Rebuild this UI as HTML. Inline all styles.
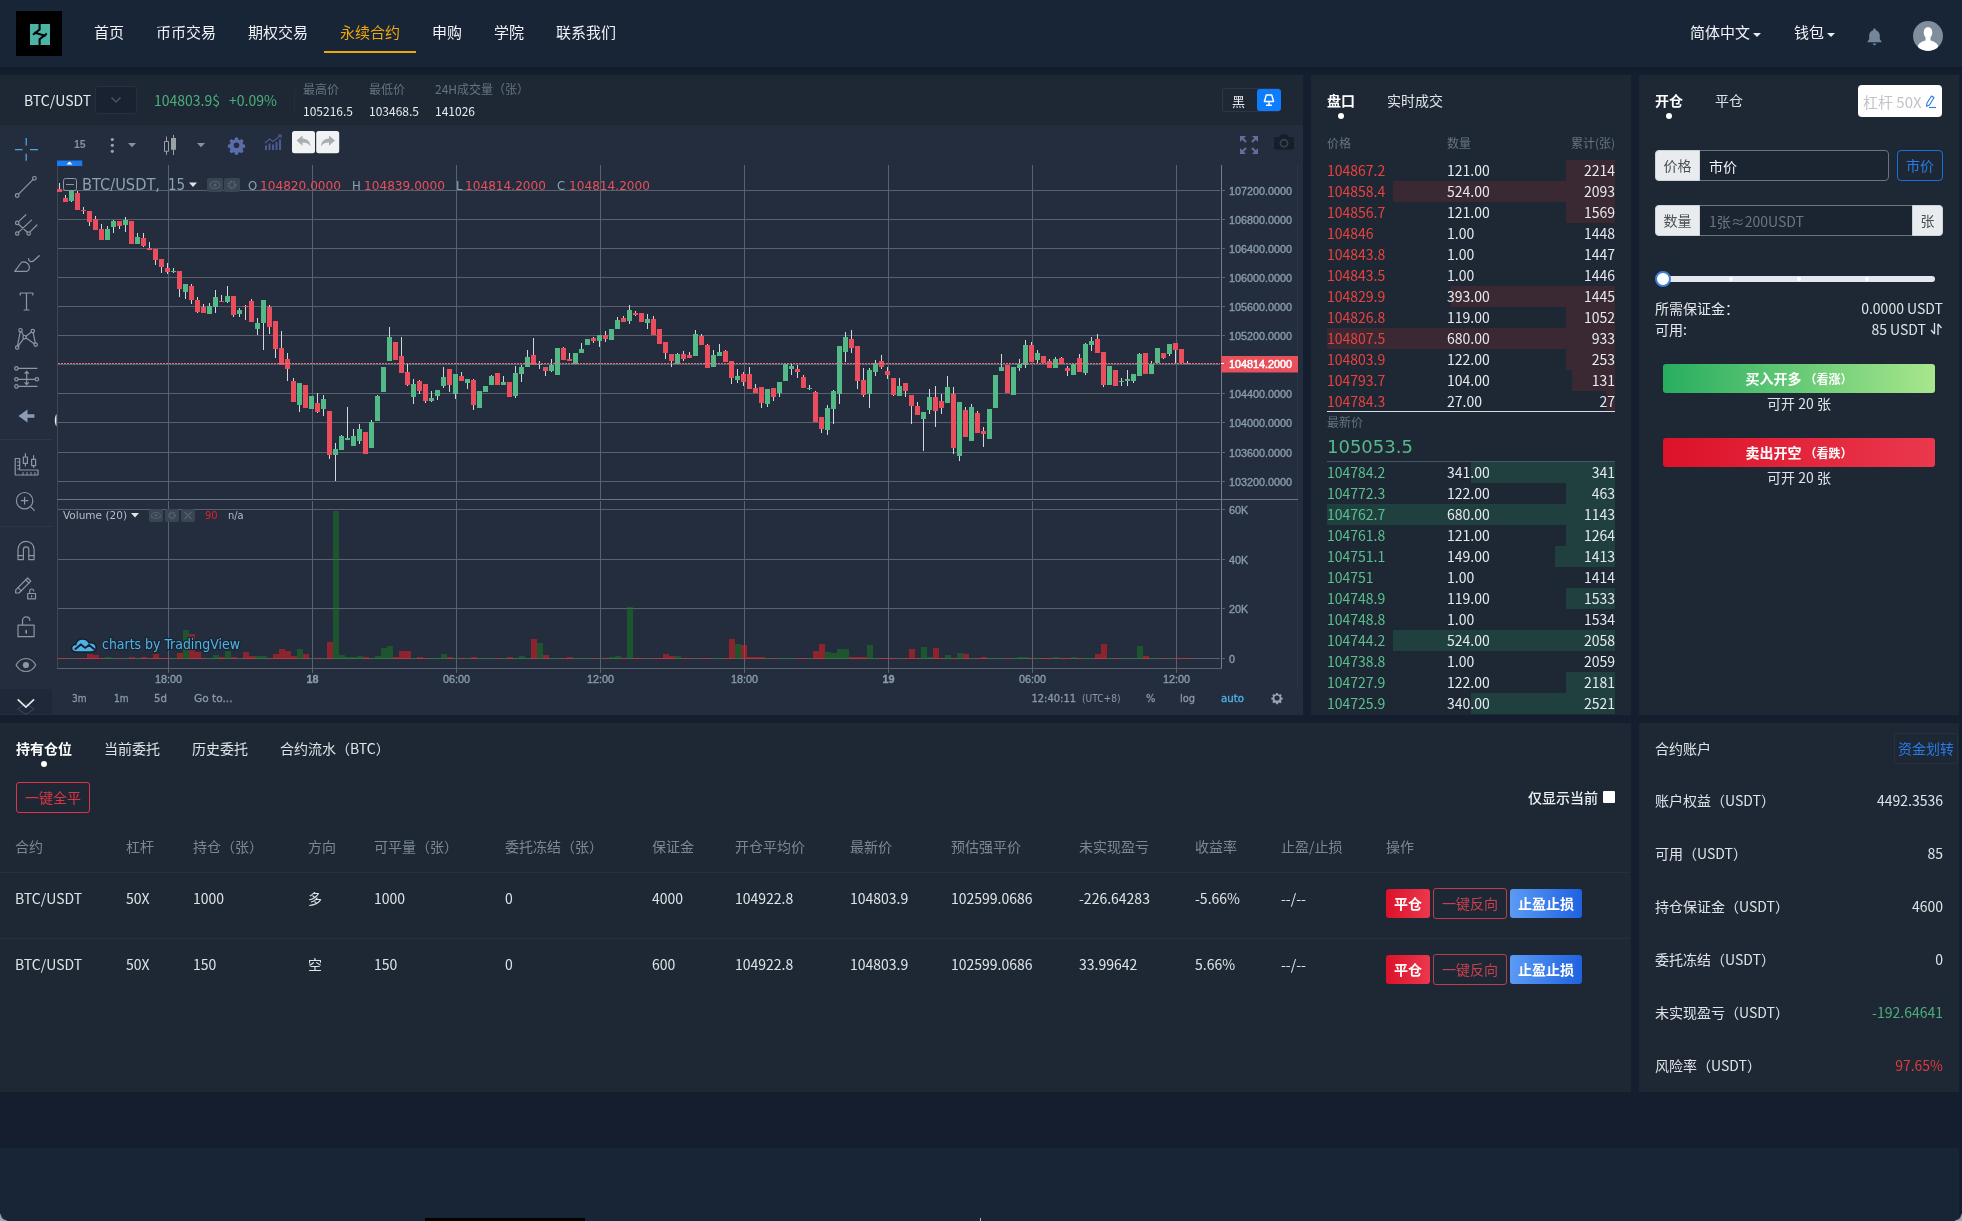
<!DOCTYPE html>
<html lang="zh-CN">
<head>
<meta charset="utf-8">
<title>永续合约 BTC/USDT</title>
<style>
*{box-sizing:border-box;margin:0;padding:0}
html,body{width:1962px;height:1221px;overflow:hidden}
body{background:#151e2e;color:#e1e5ea;font-family:"Noto Sans CJK SC","Liberation Sans",sans-serif;font-size:14px;line-height:20px;position:relative}
.abs{position:absolute}
.panel{position:absolute;background:#1e2835}
/* header */
#hd{left:0;top:0;width:1962px;height:67px;background:#172536;box-shadow:0 1px 4px rgba(10,14,24,.35)}
#logo{left:16px;top:11px;width:46px;height:45px;background:#000}
.nav{position:absolute;top:21px;font-size:15px;line-height:22px;color:#f1f3f6;white-space:nowrap}
.nav.on{color:#f0a70a}
#navline{left:324px;top:51px;width:92px;height:2px;background:#f0a70a}
.caret{display:inline-block;width:0;height:0;border-left:4px solid transparent;border-right:4px solid transparent;border-top:4px solid #e8ebef;vertical-align:middle;margin-left:3px;position:relative;top:1px}
/* symbol bar */
#sym{left:0;top:75px;width:1303px;height:50px;background:#1e2835}
.t{position:absolute;white-space:nowrap}
.g{color:#4caf7a}
.r{color:#e8423f}
.mut{color:#677380}
/* order book */
#ob{left:1311px;top:75px;width:320px;height:640px}
.obrow{position:absolute;left:16px;width:288px;height:21px;font-size:14px;line-height:21px}
.obrow span{position:absolute;top:0;white-space:nowrap}
.obrow .p{left:0}
.obrow .q{left:120px;color:#e6e9ed}
.obrow .c{right:0;color:#e6e9ed}
.obrow i{position:absolute;right:0;top:0;height:21px}
.ask i{background:#3a2833}
.bid i{background:#20403f}
.ask .p{color:#e8423f}
.bid .p{color:#5bbf8c}
/* trade */
#tr{left:1639px;top:75px;width:320px;height:640px}
/* bottom */
#pos{left:0;top:723px;width:1631px;height:369px}
#acc{left:1639px;top:723px;width:320px;height:369px}
#ft{left:0;top:1148px;width:1959px;height:73px;background:#172536}
.th{position:absolute;top:837px;font-size:14px;color:#7d8794;white-space:nowrap}
.td{position:absolute;font-size:14px;color:#dfe3e8;white-space:nowrap}
.btn{position:absolute;height:29px;line-height:29px;border-radius:3px;font-size:14px;text-align:center;white-space:nowrap}
/* chart */
#chart{left:0;top:125px;width:1303px;height:590px;background:#232d3d;overflow:hidden}
</style>
</head>
<body>
<div id="wrap" style="position:absolute;left:0;top:0;width:1962px;height:1221px;will-change:transform;overflow:hidden">
<div id="hd" class="abs">
  <div id="logo" class="abs">
    <svg width="46" height="45" viewBox="0 0 46 45"><rect x="14" y="13" width="20" height="21" fill="#4bb4a5"/><path d="M23.600 13V18.500L17 23.800M18.300 21.600L29.700 24.900M30.800 22.600L23.600 28.200V34" fill="none" stroke="#020406" stroke-width="2.100"/></svg>
  </div>
  <span class="nav" style="left:94px">首页</span>
  <span class="nav" style="left:156px">币币交易</span>
  <span class="nav" style="left:248px">期权交易</span>
  <span class="nav on" style="left:340px">永续合约</span>
  <span class="nav" style="left:432px">申购</span>
  <span class="nav" style="left:494px">学院</span>
  <span class="nav" style="left:556px">联系我们</span>
  <div id="navline" class="abs"></div>
  <span class="nav" style="left:1690px">简体中文<i class="caret"></i></span>
  <span class="nav" style="left:1794px">钱包<i class="caret"></i></span>
  <svg class="abs" style="left:1866px;top:27px" width="17" height="20" viewBox="0 0 17 20"><path d="M8.500 1.500c.8 0 1.300.5 1.300 1.200v.5c2.500.6 4 2.700 4 5.300v3.800l1.700 2.200v.8H1.500v-.8l1.700-2.200V8.500c0-2.600 1.500-4.700 4-5.300v-.5c0-.7.500-1.200 1.300-1.200z" fill="#74879a"/><path d="M6.800 16.500h3.400c0 1-.8 1.700-1.700 1.700s-1.700-.7-1.700-1.700z" fill="#74879a"/></svg>
  <svg class="abs" style="left:1913px;top:21px" width="30" height="30" viewBox="0 0 30 30"><clipPath id="avc"><circle cx="15" cy="15" r="15"/></clipPath><circle cx="15" cy="15" r="15" fill="#7f8d9c"/><g clip-path="url(#avc)" fill="#fff"><ellipse cx="15" cy="11.500" rx="4.300" ry="5.500"/><path d="M12.500 15h5v4.500c3.500 1 6.500 2.500 7.500 5v6h-20v-6c1-2.500 4-4 7.500-5z"/></g></svg>
</div>
<div id="sym" class="abs">
  <span class="t" style="left:24px;top:14px;font-size:14px;line-height:22px;color:#e6e9ed">BTC/USDT</span>
  <div class="abs" style="left:95px;top:11px;width:42px;height:28px;background:#192231;border:1px solid #263040;border-radius:3px"></div>
  <svg class="abs" style="left:110px;top:21px" width="12" height="8" viewBox="0 0 12 8"><path d="M1.500 1.500L6 6l4.500-4.500" fill="none" stroke="#4f5b6b" stroke-width="1.200"/></svg>
  <span class="t g" style="left:154px;top:14px;font-size:14px;line-height:22px">104803.9$</span>
  <span class="t g" style="left:229px;top:14px;font-size:14px;line-height:22px">+0.09%</span>
  <div class="abs" style="left:294px;top:14px;width:1px;height:26px;background:#232d3b"></div>
  <span class="t mut" style="left:303px;top:5px;font-size:12px;line-height:18px">最高价</span>
  <span class="t" style="left:303px;top:27px;font-size:12px;line-height:18px;color:#e6e9ed">105216.5</span>
  <span class="t mut" style="left:369px;top:5px;font-size:12px;line-height:18px">最低价</span>
  <span class="t" style="left:369px;top:27px;font-size:12px;line-height:18px;color:#e6e9ed">103468.5</span>
  <span class="t mut" style="left:435px;top:5px;font-size:12px;line-height:18px">24H成交量（张）</span>
  <span class="t" style="left:435px;top:27px;font-size:12px;line-height:18px;color:#e6e9ed">141026</span>
  <div class="abs" style="left:1222px;top:13px;width:59px;height:24px;border:1px solid #2b3544;border-radius:3px"></div>
  <span class="t" style="left:1232px;top:16px;font-size:13px;line-height:20px;color:#e6e8ec">黑</span>
  <div class="abs" style="left:1257px;top:14px;width:24px;height:22px;background:#0d7dff;border-radius:3px"></div>
  <svg class="abs" style="left:1262px;top:17px" width="14" height="16" viewBox="0 0 14 16"><path d="M4.300 3h5.400l1.900 6.500H2.400z" fill="none" stroke="#fff" stroke-width="1.400" stroke-linejoin="round"/><path d="M7 9.500v3.500M4 13.300h6" stroke="#fff" stroke-width="1.400"/></svg>
</div>
<div id="chart" class="abs">
<svg width="1303" height="590" viewBox="0 125 1303 590" style="position:absolute;left:0;top:0;font-family:'Liberation Sans',sans-serif">
<rect x="168" y="165" width="1" height="335" fill="#58616d"/>
<rect x="168" y="501" width="1" height="168" fill="#58616d"/>
<rect x="312" y="165" width="1" height="335" fill="#58616d"/>
<rect x="312" y="501" width="1" height="168" fill="#58616d"/>
<rect x="456" y="165" width="1" height="335" fill="#58616d"/>
<rect x="456" y="501" width="1" height="168" fill="#58616d"/>
<rect x="600" y="165" width="1" height="335" fill="#58616d"/>
<rect x="600" y="501" width="1" height="168" fill="#58616d"/>
<rect x="744" y="165" width="1" height="335" fill="#58616d"/>
<rect x="744" y="501" width="1" height="168" fill="#58616d"/>
<rect x="888" y="165" width="1" height="335" fill="#58616d"/>
<rect x="888" y="501" width="1" height="168" fill="#58616d"/>
<rect x="1032" y="165" width="1" height="335" fill="#58616d"/>
<rect x="1032" y="501" width="1" height="168" fill="#58616d"/>
<rect x="1176" y="165" width="1" height="335" fill="#58616d"/>
<rect x="1176" y="501" width="1" height="168" fill="#58616d"/>
<rect x="57" y="190" width="1163" height="1" fill="#58616d"/><rect x="1222" y="190" width="3" height="1" fill="#58616d"/>
<text x="1229" y="195" font-size="10.800" fill="#8a9cab" stroke="#8a9cab" stroke-width=".350">107200.0000</text>
<rect x="57" y="219" width="1163" height="1" fill="#58616d"/><rect x="1222" y="219" width="3" height="1" fill="#58616d"/>
<text x="1229" y="224" font-size="10.800" fill="#8a9cab" stroke="#8a9cab" stroke-width=".350">106800.0000</text>
<rect x="57" y="248" width="1163" height="1" fill="#58616d"/><rect x="1222" y="248" width="3" height="1" fill="#58616d"/>
<text x="1229" y="253" font-size="10.800" fill="#8a9cab" stroke="#8a9cab" stroke-width=".350">106400.0000</text>
<rect x="57" y="277" width="1163" height="1" fill="#58616d"/><rect x="1222" y="277" width="3" height="1" fill="#58616d"/>
<text x="1229" y="282" font-size="10.800" fill="#8a9cab" stroke="#8a9cab" stroke-width=".350">106000.0000</text>
<rect x="57" y="306" width="1163" height="1" fill="#58616d"/><rect x="1222" y="306" width="3" height="1" fill="#58616d"/>
<text x="1229" y="311" font-size="10.800" fill="#8a9cab" stroke="#8a9cab" stroke-width=".350">105600.0000</text>
<rect x="57" y="335" width="1163" height="1" fill="#58616d"/><rect x="1222" y="335" width="3" height="1" fill="#58616d"/>
<text x="1229" y="340" font-size="10.800" fill="#8a9cab" stroke="#8a9cab" stroke-width=".350">105200.0000</text>
<rect x="57" y="364" width="1163" height="1" fill="#58616d"/><rect x="1222" y="364" width="3" height="1" fill="#58616d"/>
<rect x="57" y="393" width="1163" height="1" fill="#58616d"/><rect x="1222" y="393" width="3" height="1" fill="#58616d"/>
<text x="1229" y="398" font-size="10.800" fill="#8a9cab" stroke="#8a9cab" stroke-width=".350">104400.0000</text>
<rect x="57" y="422" width="1163" height="1" fill="#58616d"/><rect x="1222" y="422" width="3" height="1" fill="#58616d"/>
<text x="1229" y="427" font-size="10.800" fill="#8a9cab" stroke="#8a9cab" stroke-width=".350">104000.0000</text>
<rect x="57" y="452" width="1163" height="1" fill="#58616d"/><rect x="1222" y="452" width="3" height="1" fill="#58616d"/>
<text x="1229" y="457" font-size="10.800" fill="#8a9cab" stroke="#8a9cab" stroke-width=".350">103600.0000</text>
<rect x="57" y="481" width="1163" height="1" fill="#58616d"/><rect x="1222" y="481" width="3" height="1" fill="#58616d"/>
<text x="1229" y="486" font-size="10.800" fill="#8a9cab" stroke="#8a9cab" stroke-width=".350">103200.0000</text>
<rect x="57" y="509" width="1163" height="1" fill="#58616d"/><rect x="1222" y="509" width="3" height="1" fill="#58616d"/>
<text x="1229" y="514" font-size="10.800" fill="#8a9cab" stroke="#8a9cab" stroke-width=".350">60K</text>
<rect x="57" y="559" width="1163" height="1" fill="#58616d"/><rect x="1222" y="559" width="3" height="1" fill="#58616d"/>
<text x="1229" y="564" font-size="10.800" fill="#8a9cab" stroke="#8a9cab" stroke-width=".350">40K</text>
<rect x="57" y="608" width="1163" height="1" fill="#58616d"/><rect x="1222" y="608" width="3" height="1" fill="#58616d"/>
<text x="1229" y="613" font-size="10.800" fill="#8a9cab" stroke="#8a9cab" stroke-width=".350">20K</text>
<rect x="57" y="658" width="1163" height="1" fill="#58616d"/><rect x="1222" y="658" width="3" height="1" fill="#58616d"/>
<text x="1229" y="663" font-size="10.800" fill="#8a9cab" stroke="#8a9cab" stroke-width=".350">0</text>
<rect x="57" y="165" width="1" height="504" fill="#3d4756"/>
<rect x="1221" y="165" width="1" height="504" fill="#727b87"/>
<rect x="1297" y="165" width="1" height="524" fill="#2a3545"/>
<rect x="57" y="499" width="1241" height="1" fill="#69727e"/>
<rect x="57" y="668" width="1165" height="1" fill="#58616d"/>
<rect x="57" y="658" width="6" height="1" fill="#f5191d" fill-opacity=".5"/>
<rect x="63" y="658" width="6" height="1" fill="#f5191d" fill-opacity=".5"/>
<rect x="69" y="658" width="6" height="1" fill="#177d20" fill-opacity=".5"/>
<rect x="75" y="658" width="6" height="1" fill="#f5191d" fill-opacity=".5"/>
<rect x="81" y="658" width="6" height="1" fill="#f5191d" fill-opacity=".5"/>
<rect x="87" y="654" width="6" height="5" fill="#f5191d" fill-opacity=".5"/>
<rect x="93" y="655" width="6" height="4" fill="#f5191d" fill-opacity=".5"/>
<rect x="99" y="658" width="6" height="1" fill="#f5191d" fill-opacity=".5"/>
<rect x="105" y="657" width="6" height="2" fill="#177d20" fill-opacity=".5"/>
<rect x="111" y="658" width="6" height="1" fill="#177d20" fill-opacity=".5"/>
<rect x="117" y="658" width="6" height="1" fill="#f5191d" fill-opacity=".5"/>
<rect x="123" y="658" width="6" height="1" fill="#177d20" fill-opacity=".5"/>
<rect x="129" y="657" width="6" height="2" fill="#f5191d" fill-opacity=".5"/>
<rect x="135" y="658" width="6" height="1" fill="#177d20" fill-opacity=".5"/>
<rect x="141" y="657" width="6" height="2" fill="#f5191d" fill-opacity=".5"/>
<rect x="147" y="658" width="6" height="1" fill="#f5191d" fill-opacity=".5"/>
<rect x="153" y="654" width="6" height="5" fill="#f5191d" fill-opacity=".5"/>
<rect x="159" y="658" width="6" height="1" fill="#f5191d" fill-opacity=".5"/>
<rect x="165" y="658" width="6" height="1" fill="#f5191d" fill-opacity=".5"/>
<rect x="171" y="658" width="6" height="1" fill="#177d20" fill-opacity=".5"/>
<rect x="177" y="653" width="6" height="6" fill="#f5191d" fill-opacity=".5"/>
<rect x="183" y="630" width="6" height="29" fill="#177d20" fill-opacity=".5"/>
<rect x="189" y="634" width="6" height="25" fill="#f5191d" fill-opacity=".5"/>
<rect x="195" y="652" width="6" height="7" fill="#f5191d" fill-opacity=".5"/>
<rect x="201" y="658" width="6" height="1" fill="#f5191d" fill-opacity=".5"/>
<rect x="207" y="658" width="6" height="1" fill="#177d20" fill-opacity=".5"/>
<rect x="213" y="655" width="6" height="4" fill="#177d20" fill-opacity=".5"/>
<rect x="219" y="657" width="6" height="2" fill="#f5191d" fill-opacity=".5"/>
<rect x="225" y="651" width="6" height="8" fill="#177d20" fill-opacity=".5"/>
<rect x="231" y="657" width="6" height="2" fill="#f5191d" fill-opacity=".5"/>
<rect x="237" y="658" width="6" height="1" fill="#177d20" fill-opacity=".5"/>
<rect x="243" y="652" width="6" height="7" fill="#f5191d" fill-opacity=".5"/>
<rect x="249" y="656" width="6" height="3" fill="#f5191d" fill-opacity=".5"/>
<rect x="255" y="656" width="6" height="3" fill="#177d20" fill-opacity=".5"/>
<rect x="261" y="656" width="6" height="3" fill="#177d20" fill-opacity=".5"/>
<rect x="267" y="658" width="6" height="1" fill="#f5191d" fill-opacity=".5"/>
<rect x="273" y="654" width="6" height="5" fill="#f5191d" fill-opacity=".5"/>
<rect x="279" y="649" width="6" height="10" fill="#f5191d" fill-opacity=".5"/>
<rect x="285" y="651" width="6" height="8" fill="#f5191d" fill-opacity=".5"/>
<rect x="291" y="656" width="6" height="3" fill="#f5191d" fill-opacity=".5"/>
<rect x="297" y="649" width="6" height="10" fill="#177d20" fill-opacity=".5"/>
<rect x="303" y="654" width="6" height="5" fill="#f5191d" fill-opacity=".5"/>
<rect x="309" y="658" width="6" height="1" fill="#177d20" fill-opacity=".5"/>
<rect x="315" y="658" width="6" height="1" fill="#f5191d" fill-opacity=".5"/>
<rect x="321" y="658" width="6" height="1" fill="#177d20" fill-opacity=".5"/>
<rect x="327" y="642" width="6" height="17" fill="#f5191d" fill-opacity=".5"/>
<rect x="333" y="511" width="6" height="148" fill="#177d20" fill-opacity=".5"/>
<rect x="339" y="655" width="6" height="4" fill="#177d20" fill-opacity=".5"/>
<rect x="345" y="657" width="6" height="2" fill="#177d20" fill-opacity=".5"/>
<rect x="351" y="657" width="6" height="2" fill="#177d20" fill-opacity=".5"/>
<rect x="357" y="656" width="6" height="3" fill="#177d20" fill-opacity=".5"/>
<rect x="363" y="657" width="6" height="2" fill="#f5191d" fill-opacity=".5"/>
<rect x="369" y="658" width="6" height="1" fill="#177d20" fill-opacity=".5"/>
<rect x="375" y="656" width="6" height="3" fill="#177d20" fill-opacity=".5"/>
<rect x="381" y="648" width="6" height="11" fill="#177d20" fill-opacity=".5"/>
<rect x="387" y="646" width="6" height="13" fill="#177d20" fill-opacity=".5"/>
<rect x="393" y="657" width="6" height="2" fill="#f5191d" fill-opacity=".5"/>
<rect x="399" y="651" width="6" height="8" fill="#f5191d" fill-opacity=".5"/>
<rect x="405" y="651" width="6" height="8" fill="#f5191d" fill-opacity=".5"/>
<rect x="411" y="658" width="6" height="1" fill="#177d20" fill-opacity=".5"/>
<rect x="417" y="657" width="6" height="2" fill="#f5191d" fill-opacity=".5"/>
<rect x="423" y="658" width="6" height="1" fill="#f5191d" fill-opacity=".5"/>
<rect x="429" y="658" width="6" height="1" fill="#177d20" fill-opacity=".5"/>
<rect x="435" y="658" width="6" height="1" fill="#177d20" fill-opacity=".5"/>
<rect x="441" y="654" width="6" height="5" fill="#177d20" fill-opacity=".5"/>
<rect x="447" y="657" width="6" height="2" fill="#f5191d" fill-opacity=".5"/>
<rect x="453" y="658" width="6" height="1" fill="#177d20" fill-opacity=".5"/>
<rect x="459" y="658" width="6" height="1" fill="#f5191d" fill-opacity=".5"/>
<rect x="465" y="658" width="6" height="1" fill="#177d20" fill-opacity=".5"/>
<rect x="471" y="657" width="6" height="2" fill="#f5191d" fill-opacity=".5"/>
<rect x="477" y="658" width="6" height="1" fill="#177d20" fill-opacity=".5"/>
<rect x="483" y="658" width="6" height="1" fill="#177d20" fill-opacity=".5"/>
<rect x="489" y="658" width="6" height="1" fill="#177d20" fill-opacity=".5"/>
<rect x="495" y="658" width="6" height="1" fill="#f5191d" fill-opacity=".5"/>
<rect x="501" y="658" width="6" height="1" fill="#177d20" fill-opacity=".5"/>
<rect x="507" y="657" width="6" height="2" fill="#f5191d" fill-opacity=".5"/>
<rect x="513" y="658" width="6" height="1" fill="#177d20" fill-opacity=".5"/>
<rect x="519" y="656" width="6" height="3" fill="#177d20" fill-opacity=".5"/>
<rect x="525" y="658" width="6" height="1" fill="#177d20" fill-opacity=".5"/>
<rect x="531" y="639" width="6" height="20" fill="#f5191d" fill-opacity=".5"/>
<rect x="537" y="643" width="6" height="16" fill="#177d20" fill-opacity=".5"/>
<rect x="543" y="655" width="6" height="4" fill="#f5191d" fill-opacity=".5"/>
<rect x="549" y="658" width="6" height="1" fill="#177d20" fill-opacity=".5"/>
<rect x="555" y="658" width="6" height="1" fill="#177d20" fill-opacity=".5"/>
<rect x="561" y="658" width="6" height="1" fill="#f5191d" fill-opacity=".5"/>
<rect x="567" y="657" width="6" height="2" fill="#f5191d" fill-opacity=".5"/>
<rect x="573" y="658" width="6" height="1" fill="#177d20" fill-opacity=".5"/>
<rect x="579" y="658" width="6" height="1" fill="#177d20" fill-opacity=".5"/>
<rect x="585" y="658" width="6" height="1" fill="#177d20" fill-opacity=".5"/>
<rect x="591" y="658" width="6" height="1" fill="#f5191d" fill-opacity=".5"/>
<rect x="597" y="658" width="6" height="1" fill="#177d20" fill-opacity=".5"/>
<rect x="603" y="658" width="6" height="1" fill="#f5191d" fill-opacity=".5"/>
<rect x="609" y="657" width="6" height="2" fill="#177d20" fill-opacity=".5"/>
<rect x="615" y="656" width="6" height="3" fill="#177d20" fill-opacity=".5"/>
<rect x="621" y="658" width="6" height="1" fill="#f5191d" fill-opacity=".5"/>
<rect x="627" y="607" width="6" height="52" fill="#177d20" fill-opacity=".5"/>
<rect x="633" y="658" width="6" height="1" fill="#f5191d" fill-opacity=".5"/>
<rect x="639" y="658" width="6" height="1" fill="#f5191d" fill-opacity=".5"/>
<rect x="645" y="658" width="6" height="1" fill="#177d20" fill-opacity=".5"/>
<rect x="651" y="658" width="6" height="1" fill="#f5191d" fill-opacity=".5"/>
<rect x="657" y="658" width="6" height="1" fill="#f5191d" fill-opacity=".5"/>
<rect x="663" y="654" width="6" height="5" fill="#f5191d" fill-opacity=".5"/>
<rect x="669" y="656" width="6" height="3" fill="#f5191d" fill-opacity=".5"/>
<rect x="675" y="656" width="6" height="3" fill="#177d20" fill-opacity=".5"/>
<rect x="681" y="658" width="6" height="1" fill="#f5191d" fill-opacity=".5"/>
<rect x="687" y="658" width="6" height="1" fill="#f5191d" fill-opacity=".5"/>
<rect x="693" y="658" width="6" height="1" fill="#177d20" fill-opacity=".5"/>
<rect x="699" y="658" width="6" height="1" fill="#f5191d" fill-opacity=".5"/>
<rect x="705" y="658" width="6" height="1" fill="#f5191d" fill-opacity=".5"/>
<rect x="711" y="658" width="6" height="1" fill="#177d20" fill-opacity=".5"/>
<rect x="717" y="658" width="6" height="1" fill="#177d20" fill-opacity=".5"/>
<rect x="723" y="658" width="6" height="1" fill="#f5191d" fill-opacity=".5"/>
<rect x="729" y="639" width="6" height="20" fill="#f5191d" fill-opacity=".5"/>
<rect x="735" y="644" width="6" height="15" fill="#177d20" fill-opacity=".5"/>
<rect x="741" y="645" width="6" height="14" fill="#f5191d" fill-opacity=".5"/>
<rect x="747" y="657" width="6" height="2" fill="#f5191d" fill-opacity=".5"/>
<rect x="753" y="657" width="6" height="2" fill="#f5191d" fill-opacity=".5"/>
<rect x="759" y="657" width="6" height="2" fill="#f5191d" fill-opacity=".5"/>
<rect x="765" y="658" width="6" height="1" fill="#177d20" fill-opacity=".5"/>
<rect x="771" y="658" width="6" height="1" fill="#f5191d" fill-opacity=".5"/>
<rect x="777" y="658" width="6" height="1" fill="#177d20" fill-opacity=".5"/>
<rect x="783" y="658" width="6" height="1" fill="#177d20" fill-opacity=".5"/>
<rect x="789" y="658" width="6" height="1" fill="#177d20" fill-opacity=".5"/>
<rect x="795" y="658" width="6" height="1" fill="#f5191d" fill-opacity=".5"/>
<rect x="801" y="658" width="6" height="1" fill="#f5191d" fill-opacity=".5"/>
<rect x="807" y="658" width="6" height="1" fill="#177d20" fill-opacity=".5"/>
<rect x="813" y="651" width="6" height="8" fill="#f5191d" fill-opacity=".5"/>
<rect x="819" y="644" width="6" height="15" fill="#f5191d" fill-opacity=".5"/>
<rect x="825" y="652" width="6" height="7" fill="#177d20" fill-opacity=".5"/>
<rect x="831" y="653" width="6" height="6" fill="#177d20" fill-opacity=".5"/>
<rect x="837" y="649" width="6" height="10" fill="#177d20" fill-opacity=".5"/>
<rect x="843" y="649" width="6" height="10" fill="#177d20" fill-opacity=".5"/>
<rect x="849" y="657" width="6" height="2" fill="#f5191d" fill-opacity=".5"/>
<rect x="855" y="657" width="6" height="2" fill="#f5191d" fill-opacity=".5"/>
<rect x="861" y="657" width="6" height="2" fill="#f5191d" fill-opacity=".5"/>
<rect x="867" y="645" width="6" height="14" fill="#177d20" fill-opacity=".5"/>
<rect x="873" y="658" width="6" height="1" fill="#177d20" fill-opacity=".5"/>
<rect x="879" y="658" width="6" height="1" fill="#f5191d" fill-opacity=".5"/>
<rect x="885" y="658" width="6" height="1" fill="#f5191d" fill-opacity=".5"/>
<rect x="891" y="658" width="6" height="1" fill="#f5191d" fill-opacity=".5"/>
<rect x="897" y="658" width="6" height="1" fill="#177d20" fill-opacity=".5"/>
<rect x="903" y="658" width="6" height="1" fill="#f5191d" fill-opacity=".5"/>
<rect x="909" y="649" width="6" height="10" fill="#f5191d" fill-opacity=".5"/>
<rect x="915" y="658" width="6" height="1" fill="#f5191d" fill-opacity=".5"/>
<rect x="921" y="647" width="6" height="12" fill="#177d20" fill-opacity=".5"/>
<rect x="927" y="657" width="6" height="2" fill="#177d20" fill-opacity=".5"/>
<rect x="933" y="648" width="6" height="11" fill="#f5191d" fill-opacity=".5"/>
<rect x="939" y="658" width="6" height="1" fill="#f5191d" fill-opacity=".5"/>
<rect x="945" y="655" width="6" height="4" fill="#177d20" fill-opacity=".5"/>
<rect x="951" y="658" width="6" height="1" fill="#f5191d" fill-opacity=".5"/>
<rect x="957" y="653" width="6" height="6" fill="#177d20" fill-opacity=".5"/>
<rect x="963" y="654" width="6" height="5" fill="#f5191d" fill-opacity=".5"/>
<rect x="969" y="658" width="6" height="1" fill="#177d20" fill-opacity=".5"/>
<rect x="975" y="658" width="6" height="1" fill="#f5191d" fill-opacity=".5"/>
<rect x="981" y="657" width="6" height="2" fill="#f5191d" fill-opacity=".5"/>
<rect x="987" y="658" width="6" height="1" fill="#177d20" fill-opacity=".5"/>
<rect x="993" y="658" width="6" height="1" fill="#177d20" fill-opacity=".5"/>
<rect x="999" y="658" width="6" height="1" fill="#177d20" fill-opacity=".5"/>
<rect x="1005" y="658" width="6" height="1" fill="#f5191d" fill-opacity=".5"/>
<rect x="1011" y="658" width="6" height="1" fill="#177d20" fill-opacity=".5"/>
<rect x="1017" y="657" width="6" height="2" fill="#177d20" fill-opacity=".5"/>
<rect x="1023" y="657" width="6" height="2" fill="#177d20" fill-opacity=".5"/>
<rect x="1029" y="658" width="6" height="1" fill="#f5191d" fill-opacity=".5"/>
<rect x="1035" y="658" width="6" height="1" fill="#177d20" fill-opacity=".5"/>
<rect x="1041" y="658" width="6" height="1" fill="#f5191d" fill-opacity=".5"/>
<rect x="1047" y="658" width="6" height="1" fill="#f5191d" fill-opacity=".5"/>
<rect x="1053" y="657" width="6" height="2" fill="#177d20" fill-opacity=".5"/>
<rect x="1059" y="658" width="6" height="1" fill="#f5191d" fill-opacity=".5"/>
<rect x="1065" y="658" width="6" height="1" fill="#f5191d" fill-opacity=".5"/>
<rect x="1071" y="657" width="6" height="2" fill="#177d20" fill-opacity=".5"/>
<rect x="1077" y="658" width="6" height="1" fill="#f5191d" fill-opacity=".5"/>
<rect x="1083" y="658" width="6" height="1" fill="#177d20" fill-opacity=".5"/>
<rect x="1089" y="658" width="6" height="1" fill="#177d20" fill-opacity=".5"/>
<rect x="1095" y="654" width="6" height="5" fill="#f5191d" fill-opacity=".5"/>
<rect x="1101" y="644" width="6" height="15" fill="#f5191d" fill-opacity=".5"/>
<rect x="1107" y="658" width="6" height="1" fill="#177d20" fill-opacity=".5"/>
<rect x="1113" y="658" width="6" height="1" fill="#f5191d" fill-opacity=".5"/>
<rect x="1119" y="658" width="6" height="1" fill="#177d20" fill-opacity=".5"/>
<rect x="1125" y="658" width="6" height="1" fill="#177d20" fill-opacity=".5"/>
<rect x="1131" y="658" width="6" height="1" fill="#177d20" fill-opacity=".5"/>
<rect x="1137" y="646" width="6" height="13" fill="#177d20" fill-opacity=".5"/>
<rect x="1143" y="656" width="6" height="3" fill="#f5191d" fill-opacity=".5"/>
<rect x="1149" y="658" width="6" height="1" fill="#177d20" fill-opacity=".5"/>
<rect x="1155" y="658" width="6" height="1" fill="#177d20" fill-opacity=".5"/>
<rect x="1161" y="658" width="6" height="1" fill="#f5191d" fill-opacity=".5"/>
<rect x="1167" y="658" width="6" height="1" fill="#177d20" fill-opacity=".5"/>
<rect x="1173" y="658" width="6" height="1" fill="#f5191d" fill-opacity=".5"/>
<rect x="1179" y="658" width="6" height="1" fill="#f5191d" fill-opacity=".5"/>
<rect x="1185" y="658" width="6" height="1" fill="#f5191d" fill-opacity=".5"/>
<rect x="59" y="183" width="1" height="9" fill="#d3d6db"/>
<rect x="57" y="189" width="5" height="3" fill="#eb4d5c"/>
<rect x="65" y="195" width="1" height="7" fill="#d3d6db"/>
<rect x="63" y="198" width="5" height="4" fill="#eb4d5c"/>
<rect x="71" y="191" width="1" height="11" fill="#d3d6db"/>
<rect x="69" y="191" width="5" height="10" fill="#53b987"/>
<rect x="77" y="191" width="1" height="19" fill="#d3d6db"/>
<rect x="75" y="193" width="5" height="17" fill="#eb4d5c"/>
<rect x="83" y="207" width="1" height="7" fill="#d3d6db"/>
<rect x="81" y="210" width="5" height="1" fill="#eb4d5c"/>
<rect x="89" y="211" width="1" height="15" fill="#d3d6db"/>
<rect x="87" y="211" width="5" height="11" fill="#eb4d5c"/>
<rect x="95" y="216" width="1" height="14" fill="#d3d6db"/>
<rect x="93" y="219" width="5" height="11" fill="#eb4d5c"/>
<rect x="101" y="224" width="1" height="16" fill="#d3d6db"/>
<rect x="99" y="229" width="5" height="11" fill="#eb4d5c"/>
<rect x="107" y="226" width="1" height="14" fill="#d3d6db"/>
<rect x="105" y="229" width="5" height="11" fill="#53b987"/>
<rect x="113" y="220" width="1" height="13" fill="#d3d6db"/>
<rect x="111" y="221" width="5" height="6" fill="#53b987"/>
<rect x="119" y="221" width="1" height="8" fill="#d3d6db"/>
<rect x="117" y="221" width="5" height="5" fill="#eb4d5c"/>
<rect x="125" y="217" width="1" height="15" fill="#d3d6db"/>
<rect x="123" y="220" width="5" height="5" fill="#53b987"/>
<rect x="131" y="221" width="1" height="23" fill="#d3d6db"/>
<rect x="129" y="221" width="5" height="23" fill="#eb4d5c"/>
<rect x="137" y="233" width="1" height="11" fill="#d3d6db"/>
<rect x="135" y="237" width="5" height="7" fill="#53b987"/>
<rect x="143" y="233" width="1" height="14" fill="#d3d6db"/>
<rect x="141" y="238" width="5" height="8" fill="#eb4d5c"/>
<rect x="149" y="242" width="1" height="8" fill="#d3d6db"/>
<rect x="147" y="248" width="5" height="2" fill="#eb4d5c"/>
<rect x="155" y="249" width="1" height="16" fill="#d3d6db"/>
<rect x="153" y="249" width="5" height="11" fill="#eb4d5c"/>
<rect x="161" y="259" width="1" height="14" fill="#d3d6db"/>
<rect x="159" y="259" width="5" height="8" fill="#eb4d5c"/>
<rect x="167" y="263" width="1" height="11" fill="#d3d6db"/>
<rect x="165" y="268" width="5" height="4" fill="#eb4d5c"/>
<rect x="173" y="268" width="1" height="5" fill="#d3d6db"/>
<rect x="171" y="271" width="5" height="1" fill="#53b987"/>
<rect x="179" y="271" width="1" height="26" fill="#d3d6db"/>
<rect x="177" y="271" width="5" height="18" fill="#eb4d5c"/>
<rect x="185" y="284" width="1" height="15" fill="#d3d6db"/>
<rect x="183" y="284" width="5" height="8" fill="#53b987"/>
<rect x="191" y="284" width="1" height="20" fill="#d3d6db"/>
<rect x="189" y="286" width="5" height="14" fill="#eb4d5c"/>
<rect x="197" y="297" width="1" height="16" fill="#d3d6db"/>
<rect x="195" y="300" width="5" height="12" fill="#eb4d5c"/>
<rect x="203" y="304" width="1" height="9" fill="#d3d6db"/>
<rect x="201" y="307" width="5" height="6" fill="#eb4d5c"/>
<rect x="209" y="303" width="1" height="11" fill="#d3d6db"/>
<rect x="207" y="306" width="5" height="8" fill="#53b987"/>
<rect x="215" y="290" width="1" height="23" fill="#d3d6db"/>
<rect x="213" y="297" width="5" height="10" fill="#53b987"/>
<rect x="221" y="295" width="1" height="7" fill="#d3d6db"/>
<rect x="219" y="301" width="5" height="1" fill="#eb4d5c"/>
<rect x="227" y="286" width="1" height="17" fill="#d3d6db"/>
<rect x="225" y="296" width="5" height="6" fill="#53b987"/>
<rect x="233" y="296" width="1" height="21" fill="#d3d6db"/>
<rect x="231" y="296" width="5" height="19" fill="#eb4d5c"/>
<rect x="239" y="308" width="1" height="9" fill="#d3d6db"/>
<rect x="237" y="310" width="5" height="4" fill="#53b987"/>
<rect x="245" y="305" width="1" height="15" fill="#d3d6db"/>
<rect x="243" y="306" width="5" height="1" fill="#eb4d5c"/>
<rect x="251" y="299" width="1" height="23" fill="#d3d6db"/>
<rect x="249" y="301" width="5" height="21" fill="#eb4d5c"/>
<rect x="257" y="318" width="1" height="17" fill="#d3d6db"/>
<rect x="255" y="323" width="5" height="6" fill="#53b987"/>
<rect x="263" y="300" width="1" height="50" fill="#d3d6db"/>
<rect x="261" y="300" width="5" height="23" fill="#53b987"/>
<rect x="269" y="305" width="1" height="29" fill="#d3d6db"/>
<rect x="267" y="307" width="5" height="20" fill="#eb4d5c"/>
<rect x="275" y="321" width="1" height="37" fill="#d3d6db"/>
<rect x="273" y="321" width="5" height="28" fill="#eb4d5c"/>
<rect x="281" y="331" width="1" height="34" fill="#d3d6db"/>
<rect x="279" y="348" width="5" height="17" fill="#eb4d5c"/>
<rect x="287" y="353" width="1" height="28" fill="#d3d6db"/>
<rect x="285" y="359" width="5" height="10" fill="#eb4d5c"/>
<rect x="293" y="378" width="1" height="24" fill="#d3d6db"/>
<rect x="291" y="381" width="5" height="21" fill="#eb4d5c"/>
<rect x="299" y="383" width="1" height="29" fill="#d3d6db"/>
<rect x="297" y="383" width="5" height="22" fill="#53b987"/>
<rect x="305" y="385" width="1" height="23" fill="#d3d6db"/>
<rect x="303" y="385" width="5" height="23" fill="#eb4d5c"/>
<rect x="311" y="396" width="1" height="13" fill="#d3d6db"/>
<rect x="309" y="396" width="5" height="13" fill="#53b987"/>
<rect x="317" y="393" width="1" height="20" fill="#d3d6db"/>
<rect x="315" y="403" width="5" height="9" fill="#eb4d5c"/>
<rect x="323" y="395" width="1" height="21" fill="#d3d6db"/>
<rect x="321" y="399" width="5" height="10" fill="#53b987"/>
<rect x="329" y="411" width="1" height="48" fill="#d3d6db"/>
<rect x="327" y="411" width="5" height="44" fill="#eb4d5c"/>
<rect x="335" y="443" width="1" height="38" fill="#d3d6db"/>
<rect x="333" y="449" width="5" height="6" fill="#53b987"/>
<rect x="341" y="435" width="1" height="15" fill="#d3d6db"/>
<rect x="339" y="436" width="5" height="14" fill="#53b987"/>
<rect x="347" y="407" width="1" height="33" fill="#d3d6db"/>
<rect x="345" y="438" width="5" height="2" fill="#53b987"/>
<rect x="353" y="429" width="1" height="17" fill="#d3d6db"/>
<rect x="351" y="436" width="5" height="10" fill="#53b987"/>
<rect x="359" y="424" width="1" height="20" fill="#d3d6db"/>
<rect x="357" y="429" width="5" height="12" fill="#53b987"/>
<rect x="365" y="432" width="1" height="22" fill="#d3d6db"/>
<rect x="363" y="432" width="5" height="22" fill="#eb4d5c"/>
<rect x="371" y="420" width="1" height="28" fill="#d3d6db"/>
<rect x="369" y="422" width="5" height="26" fill="#53b987"/>
<rect x="377" y="395" width="1" height="26" fill="#d3d6db"/>
<rect x="375" y="396" width="5" height="25" fill="#53b987"/>
<rect x="383" y="367" width="1" height="25" fill="#d3d6db"/>
<rect x="381" y="367" width="5" height="25" fill="#53b987"/>
<rect x="389" y="327" width="1" height="34" fill="#d3d6db"/>
<rect x="387" y="337" width="5" height="24" fill="#53b987"/>
<rect x="395" y="342" width="1" height="18" fill="#d3d6db"/>
<rect x="393" y="342" width="5" height="18" fill="#eb4d5c"/>
<rect x="401" y="337" width="1" height="36" fill="#d3d6db"/>
<rect x="399" y="356" width="5" height="17" fill="#eb4d5c"/>
<rect x="407" y="364" width="1" height="22" fill="#d3d6db"/>
<rect x="405" y="372" width="5" height="13" fill="#eb4d5c"/>
<rect x="413" y="379" width="1" height="25" fill="#d3d6db"/>
<rect x="411" y="384" width="5" height="13" fill="#53b987"/>
<rect x="419" y="380" width="1" height="14" fill="#d3d6db"/>
<rect x="417" y="381" width="5" height="10" fill="#eb4d5c"/>
<rect x="425" y="384" width="1" height="19" fill="#d3d6db"/>
<rect x="423" y="384" width="5" height="17" fill="#eb4d5c"/>
<rect x="431" y="391" width="1" height="11" fill="#d3d6db"/>
<rect x="429" y="398" width="5" height="3" fill="#53b987"/>
<rect x="437" y="390" width="1" height="10" fill="#d3d6db"/>
<rect x="435" y="390" width="5" height="6" fill="#53b987"/>
<rect x="443" y="367" width="1" height="21" fill="#d3d6db"/>
<rect x="441" y="377" width="5" height="9" fill="#53b987"/>
<rect x="449" y="369" width="1" height="23" fill="#d3d6db"/>
<rect x="447" y="369" width="5" height="16" fill="#eb4d5c"/>
<rect x="455" y="374" width="1" height="25" fill="#d3d6db"/>
<rect x="453" y="374" width="5" height="20" fill="#53b987"/>
<rect x="461" y="372" width="1" height="9" fill="#d3d6db"/>
<rect x="459" y="376" width="5" height="5" fill="#eb4d5c"/>
<rect x="467" y="379" width="1" height="10" fill="#d3d6db"/>
<rect x="465" y="379" width="5" height="4" fill="#53b987"/>
<rect x="473" y="379" width="1" height="31" fill="#d3d6db"/>
<rect x="471" y="380" width="5" height="25" fill="#eb4d5c"/>
<rect x="479" y="391" width="1" height="17" fill="#d3d6db"/>
<rect x="477" y="391" width="5" height="17" fill="#53b987"/>
<rect x="485" y="386" width="1" height="6" fill="#d3d6db"/>
<rect x="483" y="386" width="5" height="6" fill="#53b987"/>
<rect x="491" y="375" width="1" height="10" fill="#d3d6db"/>
<rect x="489" y="376" width="5" height="9" fill="#53b987"/>
<rect x="497" y="373" width="1" height="12" fill="#d3d6db"/>
<rect x="495" y="373" width="5" height="12" fill="#eb4d5c"/>
<rect x="503" y="376" width="1" height="9" fill="#d3d6db"/>
<rect x="501" y="382" width="5" height="3" fill="#53b987"/>
<rect x="509" y="382" width="1" height="15" fill="#d3d6db"/>
<rect x="507" y="382" width="5" height="15" fill="#eb4d5c"/>
<rect x="515" y="366" width="1" height="32" fill="#d3d6db"/>
<rect x="513" y="373" width="5" height="23" fill="#53b987"/>
<rect x="521" y="365" width="1" height="17" fill="#d3d6db"/>
<rect x="519" y="367" width="5" height="7" fill="#53b987"/>
<rect x="527" y="350" width="1" height="17" fill="#d3d6db"/>
<rect x="525" y="357" width="5" height="10" fill="#53b987"/>
<rect x="533" y="338" width="1" height="27" fill="#d3d6db"/>
<rect x="531" y="355" width="5" height="10" fill="#eb4d5c"/>
<rect x="539" y="361" width="1" height="8" fill="#d3d6db"/>
<rect x="537" y="364" width="5" height="1" fill="#53b987"/>
<rect x="545" y="367" width="1" height="9" fill="#d3d6db"/>
<rect x="543" y="367" width="5" height="4" fill="#eb4d5c"/>
<rect x="551" y="359" width="1" height="13" fill="#d3d6db"/>
<rect x="549" y="365" width="5" height="6" fill="#53b987"/>
<rect x="557" y="348" width="1" height="27" fill="#d3d6db"/>
<rect x="555" y="348" width="5" height="27" fill="#53b987"/>
<rect x="563" y="347" width="1" height="13" fill="#d3d6db"/>
<rect x="561" y="348" width="5" height="12" fill="#eb4d5c"/>
<rect x="569" y="353" width="1" height="8" fill="#d3d6db"/>
<rect x="567" y="359" width="5" height="2" fill="#eb4d5c"/>
<rect x="575" y="353" width="1" height="11" fill="#d3d6db"/>
<rect x="573" y="353" width="5" height="11" fill="#53b987"/>
<rect x="581" y="343" width="1" height="10" fill="#d3d6db"/>
<rect x="579" y="349" width="5" height="4" fill="#53b987"/>
<rect x="587" y="339" width="1" height="6" fill="#d3d6db"/>
<rect x="585" y="339" width="5" height="6" fill="#53b987"/>
<rect x="593" y="337" width="1" height="6" fill="#d3d6db"/>
<rect x="591" y="338" width="5" height="3" fill="#eb4d5c"/>
<rect x="599" y="335" width="1" height="12" fill="#d3d6db"/>
<rect x="597" y="335" width="5" height="6" fill="#53b987"/>
<rect x="605" y="331" width="1" height="11" fill="#d3d6db"/>
<rect x="603" y="335" width="5" height="4" fill="#eb4d5c"/>
<rect x="611" y="329" width="1" height="11" fill="#d3d6db"/>
<rect x="609" y="329" width="5" height="11" fill="#53b987"/>
<rect x="617" y="317" width="1" height="12" fill="#d3d6db"/>
<rect x="615" y="320" width="5" height="9" fill="#53b987"/>
<rect x="623" y="316" width="1" height="6" fill="#d3d6db"/>
<rect x="621" y="318" width="5" height="4" fill="#eb4d5c"/>
<rect x="629" y="305" width="1" height="19" fill="#d3d6db"/>
<rect x="627" y="310" width="5" height="11" fill="#53b987"/>
<rect x="635" y="311" width="1" height="5" fill="#d3d6db"/>
<rect x="633" y="313" width="5" height="2" fill="#eb4d5c"/>
<rect x="641" y="313" width="1" height="9" fill="#d3d6db"/>
<rect x="639" y="313" width="5" height="9" fill="#eb4d5c"/>
<rect x="647" y="314" width="1" height="15" fill="#d3d6db"/>
<rect x="645" y="319" width="5" height="4" fill="#53b987"/>
<rect x="653" y="316" width="1" height="19" fill="#d3d6db"/>
<rect x="651" y="319" width="5" height="16" fill="#eb4d5c"/>
<rect x="659" y="329" width="1" height="15" fill="#d3d6db"/>
<rect x="657" y="329" width="5" height="15" fill="#eb4d5c"/>
<rect x="665" y="342" width="1" height="17" fill="#d3d6db"/>
<rect x="663" y="342" width="5" height="11" fill="#eb4d5c"/>
<rect x="671" y="354" width="1" height="13" fill="#d3d6db"/>
<rect x="669" y="354" width="5" height="7" fill="#eb4d5c"/>
<rect x="677" y="353" width="1" height="11" fill="#d3d6db"/>
<rect x="675" y="354" width="5" height="10" fill="#53b987"/>
<rect x="683" y="351" width="1" height="10" fill="#d3d6db"/>
<rect x="681" y="354" width="5" height="5" fill="#eb4d5c"/>
<rect x="689" y="352" width="1" height="6" fill="#d3d6db"/>
<rect x="687" y="355" width="5" height="3" fill="#eb4d5c"/>
<rect x="695" y="330" width="1" height="26" fill="#d3d6db"/>
<rect x="693" y="334" width="5" height="22" fill="#53b987"/>
<rect x="701" y="334" width="1" height="11" fill="#d3d6db"/>
<rect x="699" y="336" width="5" height="9" fill="#eb4d5c"/>
<rect x="707" y="344" width="1" height="24" fill="#d3d6db"/>
<rect x="705" y="345" width="5" height="23" fill="#eb4d5c"/>
<rect x="713" y="350" width="1" height="17" fill="#d3d6db"/>
<rect x="711" y="355" width="5" height="12" fill="#53b987"/>
<rect x="719" y="344" width="1" height="12" fill="#d3d6db"/>
<rect x="717" y="352" width="5" height="4" fill="#53b987"/>
<rect x="725" y="350" width="1" height="12" fill="#d3d6db"/>
<rect x="723" y="351" width="5" height="11" fill="#eb4d5c"/>
<rect x="731" y="361" width="1" height="23" fill="#d3d6db"/>
<rect x="729" y="361" width="5" height="17" fill="#eb4d5c"/>
<rect x="737" y="369" width="1" height="14" fill="#d3d6db"/>
<rect x="735" y="376" width="5" height="4" fill="#53b987"/>
<rect x="743" y="372" width="1" height="14" fill="#d3d6db"/>
<rect x="741" y="374" width="5" height="8" fill="#eb4d5c"/>
<rect x="749" y="367" width="1" height="22" fill="#d3d6db"/>
<rect x="747" y="374" width="5" height="15" fill="#eb4d5c"/>
<rect x="755" y="384" width="1" height="9" fill="#d3d6db"/>
<rect x="753" y="388" width="5" height="5" fill="#eb4d5c"/>
<rect x="761" y="387" width="1" height="21" fill="#d3d6db"/>
<rect x="759" y="387" width="5" height="16" fill="#eb4d5c"/>
<rect x="767" y="389" width="1" height="18" fill="#d3d6db"/>
<rect x="765" y="389" width="5" height="15" fill="#53b987"/>
<rect x="773" y="388" width="1" height="13" fill="#d3d6db"/>
<rect x="771" y="388" width="5" height="9" fill="#eb4d5c"/>
<rect x="779" y="382" width="1" height="15" fill="#d3d6db"/>
<rect x="777" y="382" width="5" height="11" fill="#53b987"/>
<rect x="785" y="364" width="1" height="17" fill="#d3d6db"/>
<rect x="783" y="364" width="5" height="17" fill="#53b987"/>
<rect x="791" y="364" width="1" height="11" fill="#d3d6db"/>
<rect x="789" y="366" width="5" height="3" fill="#53b987"/>
<rect x="797" y="365" width="1" height="13" fill="#d3d6db"/>
<rect x="795" y="369" width="5" height="3" fill="#eb4d5c"/>
<rect x="803" y="375" width="1" height="13" fill="#d3d6db"/>
<rect x="801" y="377" width="5" height="11" fill="#eb4d5c"/>
<rect x="809" y="385" width="1" height="5" fill="#d3d6db"/>
<rect x="807" y="388" width="5" height="1" fill="#53b987"/>
<rect x="815" y="391" width="1" height="31" fill="#d3d6db"/>
<rect x="813" y="392" width="5" height="30" fill="#eb4d5c"/>
<rect x="821" y="417" width="1" height="16" fill="#d3d6db"/>
<rect x="819" y="417" width="5" height="12" fill="#eb4d5c"/>
<rect x="827" y="405" width="1" height="30" fill="#d3d6db"/>
<rect x="825" y="408" width="5" height="22" fill="#53b987"/>
<rect x="833" y="390" width="1" height="34" fill="#d3d6db"/>
<rect x="831" y="391" width="5" height="18" fill="#53b987"/>
<rect x="839" y="346" width="1" height="58" fill="#d3d6db"/>
<rect x="837" y="346" width="5" height="48" fill="#53b987"/>
<rect x="845" y="332" width="1" height="30" fill="#d3d6db"/>
<rect x="843" y="337" width="5" height="15" fill="#53b987"/>
<rect x="851" y="330" width="1" height="23" fill="#d3d6db"/>
<rect x="849" y="339" width="5" height="9" fill="#eb4d5c"/>
<rect x="857" y="346" width="1" height="43" fill="#d3d6db"/>
<rect x="855" y="346" width="5" height="35" fill="#eb4d5c"/>
<rect x="863" y="368" width="1" height="29" fill="#d3d6db"/>
<rect x="861" y="380" width="5" height="15" fill="#eb4d5c"/>
<rect x="869" y="368" width="1" height="40" fill="#d3d6db"/>
<rect x="867" y="370" width="5" height="24" fill="#53b987"/>
<rect x="875" y="360" width="1" height="16" fill="#d3d6db"/>
<rect x="873" y="363" width="5" height="9" fill="#53b987"/>
<rect x="881" y="355" width="1" height="14" fill="#d3d6db"/>
<rect x="879" y="361" width="5" height="6" fill="#eb4d5c"/>
<rect x="887" y="367" width="1" height="12" fill="#d3d6db"/>
<rect x="885" y="371" width="5" height="4" fill="#eb4d5c"/>
<rect x="893" y="378" width="1" height="18" fill="#d3d6db"/>
<rect x="891" y="378" width="5" height="17" fill="#eb4d5c"/>
<rect x="899" y="378" width="1" height="18" fill="#d3d6db"/>
<rect x="897" y="386" width="5" height="10" fill="#53b987"/>
<rect x="905" y="383" width="1" height="14" fill="#d3d6db"/>
<rect x="903" y="383" width="5" height="8" fill="#eb4d5c"/>
<rect x="911" y="395" width="1" height="29" fill="#d3d6db"/>
<rect x="909" y="395" width="5" height="11" fill="#eb4d5c"/>
<rect x="917" y="402" width="1" height="13" fill="#d3d6db"/>
<rect x="915" y="406" width="5" height="9" fill="#eb4d5c"/>
<rect x="923" y="412" width="1" height="39" fill="#d3d6db"/>
<rect x="921" y="412" width="5" height="7" fill="#53b987"/>
<rect x="929" y="389" width="1" height="25" fill="#d3d6db"/>
<rect x="927" y="397" width="5" height="13" fill="#53b987"/>
<rect x="935" y="386" width="1" height="41" fill="#d3d6db"/>
<rect x="933" y="397" width="5" height="14" fill="#eb4d5c"/>
<rect x="941" y="394" width="1" height="20" fill="#d3d6db"/>
<rect x="939" y="401" width="5" height="7" fill="#eb4d5c"/>
<rect x="947" y="376" width="1" height="27" fill="#d3d6db"/>
<rect x="945" y="387" width="5" height="16" fill="#53b987"/>
<rect x="953" y="387" width="1" height="67" fill="#d3d6db"/>
<rect x="951" y="394" width="5" height="54" fill="#eb4d5c"/>
<rect x="959" y="402" width="1" height="59" fill="#d3d6db"/>
<rect x="957" y="402" width="5" height="54" fill="#53b987"/>
<rect x="965" y="407" width="1" height="30" fill="#d3d6db"/>
<rect x="963" y="410" width="5" height="27" fill="#eb4d5c"/>
<rect x="971" y="404" width="1" height="37" fill="#d3d6db"/>
<rect x="969" y="407" width="5" height="34" fill="#53b987"/>
<rect x="977" y="411" width="1" height="22" fill="#d3d6db"/>
<rect x="975" y="413" width="5" height="20" fill="#eb4d5c"/>
<rect x="983" y="427" width="1" height="20" fill="#d3d6db"/>
<rect x="981" y="431" width="5" height="3" fill="#eb4d5c"/>
<rect x="989" y="409" width="1" height="30" fill="#d3d6db"/>
<rect x="987" y="409" width="5" height="30" fill="#53b987"/>
<rect x="995" y="375" width="1" height="33" fill="#d3d6db"/>
<rect x="993" y="375" width="5" height="33" fill="#53b987"/>
<rect x="1001" y="354" width="1" height="17" fill="#d3d6db"/>
<rect x="999" y="367" width="5" height="4" fill="#53b987"/>
<rect x="1007" y="365" width="1" height="28" fill="#d3d6db"/>
<rect x="1005" y="365" width="5" height="28" fill="#eb4d5c"/>
<rect x="1013" y="367" width="1" height="28" fill="#d3d6db"/>
<rect x="1011" y="367" width="5" height="28" fill="#53b987"/>
<rect x="1019" y="359" width="1" height="12" fill="#d3d6db"/>
<rect x="1017" y="364" width="5" height="4" fill="#53b987"/>
<rect x="1025" y="340" width="1" height="28" fill="#d3d6db"/>
<rect x="1023" y="345" width="5" height="20" fill="#53b987"/>
<rect x="1031" y="342" width="1" height="20" fill="#d3d6db"/>
<rect x="1029" y="345" width="5" height="17" fill="#eb4d5c"/>
<rect x="1037" y="350" width="1" height="13" fill="#d3d6db"/>
<rect x="1035" y="353" width="5" height="7" fill="#53b987"/>
<rect x="1043" y="356" width="1" height="7" fill="#d3d6db"/>
<rect x="1041" y="356" width="5" height="7" fill="#eb4d5c"/>
<rect x="1049" y="359" width="1" height="9" fill="#d3d6db"/>
<rect x="1047" y="361" width="5" height="7" fill="#eb4d5c"/>
<rect x="1055" y="357" width="1" height="11" fill="#d3d6db"/>
<rect x="1053" y="359" width="5" height="9" fill="#53b987"/>
<rect x="1061" y="357" width="1" height="7" fill="#d3d6db"/>
<rect x="1059" y="358" width="5" height="6" fill="#eb4d5c"/>
<rect x="1067" y="366" width="1" height="10" fill="#d3d6db"/>
<rect x="1065" y="368" width="5" height="3" fill="#eb4d5c"/>
<rect x="1073" y="364" width="1" height="11" fill="#d3d6db"/>
<rect x="1071" y="364" width="5" height="11" fill="#53b987"/>
<rect x="1079" y="354" width="1" height="18" fill="#d3d6db"/>
<rect x="1077" y="358" width="5" height="14" fill="#eb4d5c"/>
<rect x="1085" y="343" width="1" height="32" fill="#d3d6db"/>
<rect x="1083" y="344" width="5" height="29" fill="#53b987"/>
<rect x="1091" y="337" width="1" height="14" fill="#d3d6db"/>
<rect x="1089" y="341" width="5" height="4" fill="#53b987"/>
<rect x="1097" y="334" width="1" height="19" fill="#d3d6db"/>
<rect x="1095" y="339" width="5" height="14" fill="#eb4d5c"/>
<rect x="1103" y="352" width="1" height="35" fill="#d3d6db"/>
<rect x="1101" y="352" width="5" height="33" fill="#eb4d5c"/>
<rect x="1109" y="366" width="1" height="19" fill="#d3d6db"/>
<rect x="1107" y="366" width="5" height="19" fill="#53b987"/>
<rect x="1115" y="370" width="1" height="16" fill="#d3d6db"/>
<rect x="1113" y="370" width="5" height="16" fill="#eb4d5c"/>
<rect x="1121" y="378" width="1" height="8" fill="#d3d6db"/>
<rect x="1119" y="381" width="5" height="1" fill="#53b987"/>
<rect x="1127" y="370" width="1" height="16" fill="#d3d6db"/>
<rect x="1125" y="379" width="5" height="2" fill="#53b987"/>
<rect x="1133" y="374" width="1" height="9" fill="#d3d6db"/>
<rect x="1131" y="374" width="5" height="7" fill="#53b987"/>
<rect x="1139" y="353" width="1" height="23" fill="#d3d6db"/>
<rect x="1137" y="354" width="5" height="22" fill="#53b987"/>
<rect x="1145" y="353" width="1" height="21" fill="#d3d6db"/>
<rect x="1143" y="353" width="5" height="21" fill="#eb4d5c"/>
<rect x="1151" y="361" width="1" height="13" fill="#d3d6db"/>
<rect x="1149" y="364" width="5" height="10" fill="#53b987"/>
<rect x="1157" y="348" width="1" height="15" fill="#d3d6db"/>
<rect x="1155" y="348" width="5" height="15" fill="#53b987"/>
<rect x="1163" y="353" width="1" height="6" fill="#d3d6db"/>
<rect x="1161" y="353" width="5" height="5" fill="#eb4d5c"/>
<rect x="1169" y="344" width="1" height="12" fill="#d3d6db"/>
<rect x="1167" y="344" width="5" height="10" fill="#53b987"/>
<rect x="1175" y="343" width="1" height="20" fill="#d3d6db"/>
<rect x="1173" y="343" width="5" height="7" fill="#eb4d5c"/>
<rect x="1181" y="349" width="1" height="14" fill="#d3d6db"/>
<rect x="1179" y="349" width="5" height="14" fill="#eb4d5c"/>
<rect x="1187" y="361" width="1" height="2" fill="#d3d6db"/>
<rect x="1185" y="363" width="5" height="1" fill="#eb4d5c"/>
<line x1="58" y1="363.500" x2="1220" y2="363.500" stroke="#e4707c" stroke-width="1" stroke-dasharray="2 1"/>
<rect x="1221" y="356" width="77" height="16.500" fill="#e8505b"/>
<rect x="1221" y="363" width="3" height="1" fill="#fff"/>
<text x="1229" y="368" font-size="10.800" fill="#fff" stroke="#fff" stroke-width=".5">104814.2000</text>
<rect x="168" y="669" width="1" height="4" fill="#58616d"/><text x="168.5" y="683" font-size="10.800" fill="#8a9cab" stroke="#8a9cab" stroke-width=".350" text-anchor="middle">18:00</text>
<rect x="312" y="669" width="1" height="4" fill="#58616d"/><text x="312.5" y="683" font-size="10.800" fill="#8a9cab" stroke="#8a9cab" stroke-width=".350" font-weight="bold" text-anchor="middle">18</text>
<rect x="456" y="669" width="1" height="4" fill="#58616d"/><text x="456.5" y="683" font-size="10.800" fill="#8a9cab" stroke="#8a9cab" stroke-width=".350" text-anchor="middle">06:00</text>
<rect x="600" y="669" width="1" height="4" fill="#58616d"/><text x="600.5" y="683" font-size="10.800" fill="#8a9cab" stroke="#8a9cab" stroke-width=".350" text-anchor="middle">12:00</text>
<rect x="744" y="669" width="1" height="4" fill="#58616d"/><text x="744.5" y="683" font-size="10.800" fill="#8a9cab" stroke="#8a9cab" stroke-width=".350" text-anchor="middle">18:00</text>
<rect x="888" y="669" width="1" height="4" fill="#58616d"/><text x="888.5" y="683" font-size="10.800" fill="#8a9cab" stroke="#8a9cab" stroke-width=".350" font-weight="bold" text-anchor="middle">19</text>
<rect x="1032" y="669" width="1" height="4" fill="#58616d"/><text x="1032.5" y="683" font-size="10.800" fill="#8a9cab" stroke="#8a9cab" stroke-width=".350" text-anchor="middle">06:00</text>
<rect x="1176" y="669" width="1" height="4" fill="#58616d"/><text x="1176.5" y="683" font-size="10.800" fill="#8a9cab" stroke="#8a9cab" stroke-width=".350" text-anchor="middle">12:00</text>
<!-- legend -->
<g font-family="'DejaVu Sans Condensed','Liberation Sans',sans-serif">
<rect x="63.500" y="178.500" width="13" height="12" rx="2" fill="none" stroke="#8b98a5" stroke-width="1"/>
<rect x="66" y="184" width="8" height="1" fill="#8b98a5"/>
<text x="82" y="190" font-size="15" fill="#8da2ae" textLength="78" lengthAdjust="spacingAndGlyphs">BTC/USDT,</text>
<text x="168" y="190" font-size="15" fill="#8da2ae">15</text>
<path d="M189 182.500h8l-4 4.500z" fill="#dfe3e8"/>
<rect x="207" y="178" width="16" height="14" rx="2" fill="#3a4553"/><rect x="224" y="178" width="16" height="14" rx="2" fill="#3a4553"/>
<ellipse cx="215" cy="185" rx="5" ry="3.500" fill="none" stroke="#56616f" stroke-width="1.200"/><circle cx="215" cy="185" r="1.500" fill="#56616f"/>
<circle cx="232" cy="185" r="3.200" fill="none" stroke="#56616f" stroke-width="2.400" stroke-dasharray="1.700 0.900"/>
<text x="248" y="190" font-size="13" fill="#8da2ae">O</text>
<text x="260" y="190" font-size="13" fill="#e8505b" textLength="81" lengthAdjust="spacingAndGlyphs">104820.0000</text>
<text x="352" y="190" font-size="13" fill="#8da2ae">H</text>
<text x="364" y="190" font-size="13" fill="#e8505b" textLength="81" lengthAdjust="spacingAndGlyphs">104839.0000</text>
<text x="456" y="190" font-size="13" fill="#8da2ae">L</text>
<text x="465" y="190" font-size="13" fill="#e8505b" textLength="81" lengthAdjust="spacingAndGlyphs">104814.2000</text>
<text x="557" y="190" font-size="13" fill="#8da2ae">C</text>
<text x="569" y="190" font-size="13" fill="#e8505b" textLength="81" lengthAdjust="spacingAndGlyphs">104814.2000</text>
<!-- volume legend -->
<text x="63" y="519" font-size="11" fill="#b4bcc7" textLength="64" lengthAdjust="spacingAndGlyphs">Volume (20)</text>
<path d="M131 513h8l-4 4.500z" fill="#dfe3e8"/>
<rect x="149" y="509" width="14" height="13" rx="2" fill="#3a4553"/><rect x="165" y="509" width="14" height="13" rx="2" fill="#3a4553"/><rect x="181" y="509" width="14" height="13" rx="2" fill="#3a4553"/>
<ellipse cx="156" cy="515.500" rx="4.500" ry="3" fill="none" stroke="#56616f" stroke-width="1.100"/><circle cx="156" cy="515.500" r="1.300" fill="#56616f"/>
<circle cx="172" cy="515.500" r="2.800" fill="none" stroke="#56616f" stroke-width="2.200" stroke-dasharray="1.500 0.800"/>
<path d="M184.500 512l7 7M191.500 512l-7 7" stroke="#56616f" stroke-width="1.300"/>
<text x="205" y="519" font-size="11" fill="#e0222e">90</text>
<text x="228" y="519" font-size="11" fill="#b4bcc7">n/a</text>
<!-- tradingview logo -->
<g transform="translate(71.500 636.500) scale(1.100 1)"><path d="M4 15.500c-2.500 0-4-1.800-4-3.800 0-2.200 1.800-3.700 3.700-3.700.6-3.200 3.200-5.500 6.400-5.500 2.600 0 4.800 1.500 5.800 3.800 .4-.1.900-.2 1.300-.2 3 0 5.300 2.200 5.300 4.800 0 2.600-2.200 4.600-5 4.600z" fill="#4db2e8" stroke="#16202d" stroke-width="1.600"/>
<path d="M3 13l5.500-5 4 3.500 3.500-3 5 4.500" fill="none" stroke="#16202d" stroke-width="1.700"/></g>
<text x="102" y="649" font-size="13.500" fill="#4db2e8" stroke="#1b2431" stroke-width="2.500" paint-order="stroke" stroke-linejoin="round" textLength="138" lengthAdjust="spacingAndGlyphs">charts by TradingView</text>
<!-- bottom bar -->
<g font-size="11" fill="#8c97a6" stroke="#8c97a6" stroke-width=".300">
<text x="72" y="702" textLength="14.500" lengthAdjust="spacingAndGlyphs">3m</text><text x="114" y="702" textLength="14.500" lengthAdjust="spacingAndGlyphs">1m</text><text x="154" y="702" textLength="13" lengthAdjust="spacingAndGlyphs">5d</text><text x="194" y="702" textLength="38.500" lengthAdjust="spacingAndGlyphs">Go to...</text>
<text x="1031.500" y="702" textLength="44.500" lengthAdjust="spacingAndGlyphs">12:40:11</text><text x="1082" y="702" stroke="none" textLength="38.500" lengthAdjust="spacingAndGlyphs">(UTC+8)</text>
<text x="1146" y="702">%</text><text x="1180" y="702">log</text><text x="1221" y="702" fill="#4db2e8" stroke="#4db2e8" textLength="23" lengthAdjust="spacingAndGlyphs">auto</text>
</g>
</g>

<!-- left toolbar -->
<rect x="0" y="689" width="52" height="25" fill="#1f2838"/>
<rect x="0" y="439" width="52" height="1" fill="#2b3647"/>
<rect x="0" y="526" width="52" height="1" fill="#2b3647"/>
<g fill="none" stroke="#4ba6dc" stroke-width="1.300">
<path d="M26.200 138v7.500M26.200 153.700v7M15 149.600h7.500M30 149.600h8"/>
</g>
<g fill="none" stroke="#8d96a3" stroke-width="1.200" stroke-linecap="round" stroke-linejoin="round">
<!-- line -->
<circle cx="34.400" cy="178.300" r="1.800"/><circle cx="17.200" cy="195.500" r="1.800"/><path d="M18.600 194.100L33 179.700"/>
<!-- pitchfork -->
<circle cx="17.200" cy="222.900" r="1.700"/><circle cx="17.200" cy="233.500" r="1.700"/><circle cx="28.700" cy="233.500" r="1.700"/>
<path d="M19.300 220.900L25.900 214.800M18.400 232.400L31.500 220.100M30.300 231.600L36.900 225M18.500 224.300L27.400 232.200"/>
<!-- brush -->
<path d="M14.800 271.400L21.300 262.500C24 260.800 28.500 262.500 29.500 266.800C29.300 269.500 27.800 271.200 26.200 271.400Z"/>
<path d="M28.500 258.600C28.800 262 32 262.500 34 260.500L39.300 255.700"/>
<!-- T -->
<path d="M20.200 295v-2h12.600v2M26.500 293v17M24.100 310h4.900"/>
<!-- pattern -->
<circle cx="20.500" cy="330.200" r="1.700"/><circle cx="32.800" cy="331.100" r="1.700"/><circle cx="24.600" cy="337.200" r="1.700"/><circle cx="17.200" cy="347.500" r="1.700"/><circle cx="35.700" cy="344.600" r="1.700"/>
<path d="M20.200 331.900L17.500 345.800M21.500 331.600L23.600 335.800M26 336.200L31.400 332.100M33.200 332.800L35.300 342.900M26.200 338L34.200 343.700M23.600 338.600L18.200 346.100"/>
<!-- measure -->
<circle cx="16.400" cy="368.400" r="1.700"/><circle cx="16.400" cy="379.300" r="1.700"/><circle cx="16.400" cy="386.400" r="1.700"/><circle cx="36.900" cy="379.300" r="1.700"/>
<path d="M18.400 368.400H36.900M18.400 379.300H35M18.400 386.400H36.900M26.700 371.500V384.500M24.900 373.300L26.700 371.300L28.500 373.300M24.900 382.700L26.700 384.700L28.500 382.700"/>
<!-- chart ruler -->
<path d="M15.200 458.500H19.700V470H38V475H15.200Z"/><path d="M17.500 462h2M17.500 465.500h2M17.500 469h2M23 472.500v2.500M27 472.500v2.500M31 472.500v2.500M35 472.500v2.500" stroke-width="1"/>
<path d="M25.400 453.600v3.400M25.400 463.400v2.600M23.400 457h4v6.400h-4zM33.600 455.700v3.600M33.600 465.600v1.900M31.600 459.300h4v6.300h-4z"/>
<!-- zoom -->
<circle cx="24.600" cy="500.700" r="8.200"/><path d="M21.300 500.700h6.600M24.600 497.400v6.600M30.600 506.700L34.300 510.400"/>
<!-- magnet -->
<path d="M18 559.600V549.400C18 544.800 21.600 541.300 26.100 541.300C30.600 541.300 34.100 544.800 34.100 549.400V559.600H28.800V549.400C28.800 548 27.600 546.900 26.100 546.900C24.600 546.900 23.400 548 23.400 549.400V559.600Z"/><path d="M18 555.700h5.400M28.800 555.700h5.300"/>
<!-- pencil lock -->
<path d="M15.600 592.800L15.800 589.800L27.600 578L30.800 581.200L19 593Z"/><path d="M18 587.600L21.200 590.800M25.800 579.800L29 583"/>
<path d="M27.700 593.500h7.800v5.300h-7.800zM29.700 593.500v-2.300c0-1.200.9-2.200 2-2.200s2 .8 2 1.900"/><path d="M31.600 595.500v1.500"/>
<!-- lock -->
<path d="M18 625.200h16.100v11.400H18zM22.500 625.200v-4.400c0-2.300 1.700-4 3.700-4s3.600 1.500 3.600 3.600"/><path d="M26.200 630.500v2.600" stroke-width="1.600"/>
<!-- eye -->
<path d="M16.100 665C18.500 660.500 22 658.500 25.900 658.500S33.300 660.500 35.700 665C33.300 669.500 29.800 671.500 25.900 671.500S18.500 669.500 16.100 665Z"/>
</g>
<circle cx="25.900" cy="665" r="3.100" fill="#8d96a3"/>
<path d="M34.400 414.200v3.600H27.500v4.700L18.400 416l9.100-6.500v4.700z" fill="#8a9bb3"/>
<path d="M56.500 414C54.200 416.500 54.200 424 56.500 426.500z" fill="#e8ebef"/>
<path d="M17.700 709L25.900 703.500L34.100 709L25.900 714.500Z" fill="none" stroke="#364152" stroke-width="1.100"/>
<path d="M17.700 699.400L25.900 707.100L34.100 699.400" fill="none" stroke="#e4e7ec" stroke-width="1.700"/>
<!-- top toolbar -->
<text x="74" y="148" font-size="10.500" font-weight="bold" fill="#8790a3">15</text>
<circle cx="112.300" cy="139.500" r="1.600" fill="#9aa0aa"/><circle cx="112.300" cy="145.300" r="1.600" fill="#9aa0aa"/><circle cx="112.300" cy="151.300" r="1.600" fill="#9aa0aa"/>
<path d="M128 143h8l-4 4.200z" fill="#8a919c"/>
<path d="M166.500 136.500v5M166.500 151.300v3.500M164.500 141.500h4v9.800h-4z" fill="none" stroke="#9b9fa6" stroke-width="1"/>
<path d="M173.500 135v20" stroke="#9b9fa6" stroke-width="1"/><rect x="171" y="138" width="5" height="11.800" fill="#9b9fa6"/>
<path d="M197 143h8l-4 4.200z" fill="#8a919c"/>
<g transform="translate(236.500 145.200) scale(.880)" fill="#5b6cab">
<path d="M-1.600 -8.700h3.200l.5 2.300 1.700.7 2-1.300 2.300 2.300-1.300 2 .7 1.700 2.300.5v3.200l-2.300.5-.7 1.700 1.300 2-2.300 2.300-2-1.300-1.700.7-.5 2.300h-3.200l-.5-2.300-1.700-.7-2 1.300-2.300-2.300 1.300-2-.7-1.700-2.300-.5v-3.200l2.300-.5.700-1.700-1.300-2 2.300-2.300 2 1.300 1.700-.7zM0 -3.200a3.200 3.200 0 1 0 0 6.400a3.200 3.200 0 1 0 0 -6.400z" fill-rule="evenodd"/>
</g>
<g fill="#4c5c93"><rect x="265" y="145.500" width="2" height="4.500"/><rect x="268.500" y="143.500" width="2" height="6.500"/><rect x="272" y="144.500" width="2" height="5.500"/><rect x="275.500" y="142" width="2" height="8"/><rect x="279" y="139.500" width="2" height="10.500"/></g>
<path d="M265 143l4.500-4 3.500 2.500 7.500-6M278 135h3v3" fill="none" stroke="#4c5c93" stroke-width="1.100"/>
<rect x="292" y="131" width="23" height="22.300" rx="2.500" fill="#f1f2f4"/><rect x="316.200" y="131" width="23" height="22.300" rx="2.500" fill="#f1f2f4"/>
<path d="M296.500 140.600l6-5.200v3.200c4.800 .3 7.600 3 8 7.800-2-2.800-4.300-3.800-8-3.800v3.200z" fill="#a9acb1"/>
<path d="M335 140.600l-6-5.200v3.200c-4.800 .3-7.600 3-8 7.800 2-2.800 4.300-3.800 8-3.800v3.200z" fill="#a9acb1"/>
<rect x="57" y="160.500" width="25.200" height="5.500" fill="#1a7af0"/><path d="M66.500 164.500l3-3 3 3z" fill="#fff"/>
<!-- fullscreen + camera -->
<g fill="#666b9c"><path d="M1240 136h6l-2.200 2.200 3 3-1.600 1.600-3-3L1240 142zM1258 136v6l-2.200-2.200-3 3-1.600-1.600 3-3L1252 136zM1240 154v-6l2.200 2.200 3-3 1.600 1.600-3 3L1246 154zM1258 154h-6l2.200-2.200-3-3 1.600-1.600 3 3L1258 148z"/></g>
<path d="M1276 137h3.500l1.500-2.500h6l1.500 2.500h3.500c1.200 0 2 .8 2 2v8.600c0 1.200-.8 2-2 2h-16c-1.200 0-2-.8-2-2V139c0-1.200.8-2 2-2z" fill="#161d2b"/>
<circle cx="1284" cy="143.200" r="3.600" fill="none" stroke="#39424f" stroke-width="1.600"/>
<!-- bottom gear -->
<g transform="translate(1277 698) scale(.58)" fill="#98a2b0">
<path d="M-1.600 -8.700h3.200l.5 2.300 1.700.7 2-1.300 2.300 2.300-1.300 2 .7 1.700 2.300.5v3.200l-2.300.5-.7 1.700 1.300 2-2.300 2.300-2-1.300-1.700.7-.5 2.300h-3.200l-.5-2.300-1.700-.7-2 1.300-2.300-2.300 1.300-2-.7-1.700-2.300-.5v-3.200l2.300-.5.700-1.700-1.300-2 2.300-2.300 2 1.300 1.700-.7zM0 -4.500a4.500 4.500 0 1 0 0 9a4.500 4.500 0 1 0 0 -9z" fill-rule="evenodd"/>
</g>

</svg>
</div>
<div id="ob" class="panel">
<span class="t" style="left:16px;top:15px;font-size:14px;line-height:20px;font-weight:bold;color:#fff">盘口</span>
<div class="abs" style="left:27px;top:38px;width:6px;height:6px;border-radius:3px;background:#fff"></div>
<span class="t" style="left:76px;top:15px;font-size:14px;line-height:20px;color:#dfe3e8">实时成交</span>
<span class="t mut" style="left:16px;top:59px;font-size:12px;line-height:18px">价格</span>
<span class="t mut" style="left:136px;top:59px;font-size:12px;line-height:18px">数量</span>
<span class="t mut" style="right:16px;top:59px;font-size:12px;line-height:18px">累计(张)</span>
<div class="obrow ask" style="top:85px"><i style="width:49.0px"></i><span class="p">104867.2</span><span class="q">121.00</span><span class="c">2214</span></div>
<div class="obrow ask" style="top:106px"><i style="width:221.8px"></i><span class="p">104858.4</span><span class="q">524.00</span><span class="c">2093</span></div>
<div class="obrow ask" style="top:127px"><i style="width:49.0px"></i><span class="p">104856.7</span><span class="q">121.00</span><span class="c">1569</span></div>
<div class="obrow ask" style="top:148px"><i style="width:0.0px"></i><span class="p">104846</span><span class="q">1.00</span><span class="c">1448</span></div>
<div class="obrow ask" style="top:169px"><i style="width:0.0px"></i><span class="p">104843.8</span><span class="q">1.00</span><span class="c">1447</span></div>
<div class="obrow ask" style="top:190px"><i style="width:0.0px"></i><span class="p">104843.5</span><span class="q">1.00</span><span class="c">1446</span></div>
<div class="obrow ask" style="top:211px"><i style="width:164.2px"></i><span class="p">104829.9</span><span class="q">393.00</span><span class="c">1445</span></div>
<div class="obrow ask" style="top:232px"><i style="width:49.0px"></i><span class="p">104826.8</span><span class="q">119.00</span><span class="c">1052</span></div>
<div class="obrow ask" style="top:253px"><i style="width:288.0px"></i><span class="p">104807.5</span><span class="q">680.00</span><span class="c">933</span></div>
<div class="obrow ask" style="top:274px"><i style="width:49.0px"></i><span class="p">104803.9</span><span class="q">122.00</span><span class="c">253</span></div>
<div class="obrow ask" style="top:295px"><i style="width:43.2px"></i><span class="p">104793.7</span><span class="q">104.00</span><span class="c">131</span></div>
<div class="obrow ask" style="top:316px"><i style="width:8.6px"></i><span class="p">104784.3</span><span class="q">27.00</span><span class="c">27</span></div>
<div class="abs" style="left:16px;top:336px;width:288px;height:1px;background:#d9dde3"></div>
<span class="t mut" style="left:16px;top:338px;font-size:12px;line-height:18px">最新价</span>
<span class="t" style="left:16px;top:358px;font-family:DejaVu Sans,sans-serif;font-size:18px;line-height:28px;color:#57b98a">105053.5</span>
<div class="abs" style="left:16px;top:386px;width:288px;height:1px;background:#4a5563"></div>
<div class="obrow bid" style="top:387px"><i style="width:144.0px"></i><span class="p">104784.2</span><span class="q">341.00</span><span class="c">341</span></div>
<div class="obrow bid" style="top:408px"><i style="width:49.0px"></i><span class="p">104772.3</span><span class="q">122.00</span><span class="c">463</span></div>
<div class="obrow bid" style="top:429px"><i style="width:288.0px"></i><span class="p">104762.7</span><span class="q">680.00</span><span class="c">1143</span></div>
<div class="obrow bid" style="top:450px"><i style="width:49.0px"></i><span class="p">104761.8</span><span class="q">121.00</span><span class="c">1264</span></div>
<div class="obrow bid" style="top:471px"><i style="width:60.5px"></i><span class="p">104751.1</span><span class="q">149.00</span><span class="c">1413</span></div>
<div class="obrow bid" style="top:492px"><i style="width:0.0px"></i><span class="p">104751</span><span class="q">1.00</span><span class="c">1414</span></div>
<div class="obrow bid" style="top:513px"><i style="width:49.0px"></i><span class="p">104748.9</span><span class="q">119.00</span><span class="c">1533</span></div>
<div class="obrow bid" style="top:534px"><i style="width:0.0px"></i><span class="p">104748.8</span><span class="q">1.00</span><span class="c">1534</span></div>
<div class="obrow bid" style="top:555px"><i style="width:221.8px"></i><span class="p">104744.2</span><span class="q">524.00</span><span class="c">2058</span></div>
<div class="obrow bid" style="top:576px"><i style="width:0.0px"></i><span class="p">104738.8</span><span class="q">1.00</span><span class="c">2059</span></div>
<div class="obrow bid" style="top:597px"><i style="width:49.0px"></i><span class="p">104727.9</span><span class="q">122.00</span><span class="c">2181</span></div>
<div class="obrow bid" style="top:618px"><i style="width:144.0px"></i><span class="p">104725.9</span><span class="q">340.00</span><span class="c">2521</span></div>
</div>
<div id="tr" class="panel"><div class="abs" style="left:-1px;top:0;width:320px;height:639px">
  <span class="t" style="left:17px;top:15px;font-size:14px;line-height:20px;font-weight:bold;color:#fff">开仓</span>
  <div class="abs" style="left:28px;top:38px;width:6px;height:6px;border-radius:3px;background:#fff"></div>
  <span class="t" style="left:77px;top:15px;font-size:14px;line-height:20px;color:#dfe3e8">平仓</span>
  <div class="abs" style="left:220px;top:10px;width:84px;height:32px;background:#fff;border-radius:4px"></div>
  <span class="t" style="left:225px;top:16px;font-size:15px;line-height:22px;color:#c0c4c9">杠杆 50X</span>
  <svg class="abs" style="left:285px;top:19px" width="14" height="15" viewBox="0 0 14 15"><path d="M8.500 2l2.500 1.500-4.500 7.500-3 1.200.5-3.200z" fill="none" stroke="#2a7ae0" stroke-width="1.100" stroke-linejoin="round"/><path d="M6 13.500h7" stroke="#2a7ae0" stroke-width="1.100"/></svg>

  <div class="abs" style="left:17px;top:75px;width:234px;height:31px;border:1px solid #6a7482;border-radius:4px;background:#1b2431"></div>
  <div class="abs" style="left:17px;top:75px;width:45px;height:31px;background:#e9ecef;border-radius:4px 0 0 4px;border:1px solid #ced4da;font-size:14px;line-height:29px;text-align:center;color:#495057">价格</div>
  <span class="t" style="left:71px;top:81px;font-size:14px;line-height:20px;color:#f2f4f7">市价</span>
  <div class="abs" style="left:259px;top:75px;width:46px;height:31px;border:1px solid #1a6fe0;border-radius:4px;font-size:14px;line-height:29px;text-align:center;color:#2a7ae8">市价</div>

  <div class="abs" style="left:17px;top:130px;width:288px;height:31px;border:1px solid #6a7482;border-radius:4px;background:#1b2431"></div>
  <div class="abs" style="left:17px;top:130px;width:45px;height:31px;background:#e9ecef;border-radius:4px 0 0 4px;border:1px solid #ced4da;font-size:14px;line-height:29px;text-align:center;color:#495057">数量</div>
  <span class="t" style="left:71px;top:136px;font-size:14px;line-height:20px;color:#6c7683">1张≈200USDT</span>
  <div class="abs" style="left:274px;top:130px;width:31px;height:31px;background:#e9ecef;border-radius:0 4px 4px 0;border:1px solid #ced4da;font-size:14px;line-height:29px;text-align:center;color:#495057">张</div>

  <div class="abs" style="left:25px;top:201px;width:272px;height:6px;border-radius:3px;background:#e4e7ed"></div>
  <div class="abs" style="left:91px;top:202px;width:4px;height:4px;border-radius:2px;background:#fff"></div>
  <div class="abs" style="left:159px;top:202px;width:4px;height:4px;border-radius:2px;background:#fff"></div>
  <div class="abs" style="left:227px;top:202px;width:4px;height:4px;border-radius:2px;background:#fff"></div>
  <div class="abs" style="left:17px;top:196px;width:16px;height:16px;border-radius:8px;background:#fff;border:2px solid #3f7fd6"></div>

  <span class="t" style="left:17px;top:223px;font-size:14px;line-height:20px;color:#e6e9ee">所需保证金：</span>
  <span class="t" style="right:15px;top:223px;font-size:14px;line-height:20px;color:#dfe3e8">0.0000 USDT</span>
  <span class="t" style="left:17px;top:244px;font-size:14px;line-height:20px;color:#e6e9ee">可用:</span>
  <span class="t" style="right:32px;top:244px;font-size:14px;line-height:20px;color:#dfe3e8">85 USDT</span>
  <svg class="abs" style="left:292px;top:247px" width="13" height="14" viewBox="0 0 13 14"><path d="M4.500 1v11M4.500 12L1 8M8 13V2M8 2l3.500 4" fill="none" stroke="#dfe3e8" stroke-width="1.300"/></svg>

  <div class="abs" style="left:25px;top:289px;width:272px;height:29px;border-radius:3px;background:linear-gradient(90deg,#27ae60,#a8e68c);font-size:14px;line-height:29px;text-align:center;color:#fff;font-weight:bold">买入开多 <span style="font-size:12px">（看涨）</span></div>
  <span class="t" style="left:25px;width:272px;text-align:center;top:318px;font-size:14px;line-height:20px;color:#dfe3e8">可开 20 张</span>
  <div class="abs" style="left:25px;top:363px;width:272px;height:29px;border-radius:3px;background:linear-gradient(90deg,#dc1229,#ea384d);font-size:14px;line-height:29px;text-align:center;color:#fff;font-weight:bold">卖出开空 <span style="font-size:12px">（看跌）</span></div>
  <span class="t" style="left:25px;width:272px;text-align:center;top:392px;font-size:14px;line-height:20px;color:#dfe3e8">可开 20 张</span>
</div></div>
<div id="pos" class="panel"><div class="abs" style="left:0;top:-1px;width:1631px;height:369px">
<span class="t" style="left:16px;top:16px;font-size:14px;line-height:20px;font-weight:bold;color:#fff">持有仓位</span>
<span class="t" style="left:104px;top:16px;font-size:14px;line-height:20px;color:#dfe3e8">当前委托</span>
<span class="t" style="left:192px;top:16px;font-size:14px;line-height:20px;color:#dfe3e8">历史委托</span>
<span class="t" style="left:280px;top:16px;font-size:14px;line-height:20px;color:#dfe3e8">合约流水（BTC）</span>
<div class="abs" style="left:41px;top:39px;width:6px;height:6px;border-radius:3px;background:#fff"></div>
<div class="abs" style="left:16px;top:60px;width:74px;height:31px;border:1px solid #dc3545;border-radius:3px;font-size:14px;line-height:29px;text-align:center;color:#dc3545">一键全平</div>
<span class="t" style="left:1528px;top:65px;font-size:14px;line-height:20px;color:#eceff3;font-weight:500">仅显示当前</span>
<div class="abs" style="left:1603px;top:69px;width:12px;height:12px;background:#fff;border-radius:1px"></div>
<span class="t" style="left:15px;top:114px;font-size:14px;line-height:20px;color:#7d8794">合约</span>
<span class="t" style="left:126px;top:114px;font-size:14px;line-height:20px;color:#7d8794">杠杆</span>
<span class="t" style="left:193px;top:114px;font-size:14px;line-height:20px;color:#7d8794">持仓（张）</span>
<span class="t" style="left:308px;top:114px;font-size:14px;line-height:20px;color:#7d8794">方向</span>
<span class="t" style="left:374px;top:114px;font-size:14px;line-height:20px;color:#7d8794">可平量（张）</span>
<span class="t" style="left:505px;top:114px;font-size:14px;line-height:20px;color:#7d8794">委托冻结（张）</span>
<span class="t" style="left:652px;top:114px;font-size:14px;line-height:20px;color:#7d8794">保证金</span>
<span class="t" style="left:735px;top:114px;font-size:14px;line-height:20px;color:#7d8794">开仓平均价</span>
<span class="t" style="left:850px;top:114px;font-size:14px;line-height:20px;color:#7d8794">最新价</span>
<span class="t" style="left:951px;top:114px;font-size:14px;line-height:20px;color:#7d8794">预估强平价</span>
<span class="t" style="left:1079px;top:114px;font-size:14px;line-height:20px;color:#7d8794">未实现盈亏</span>
<span class="t" style="left:1195px;top:114px;font-size:14px;line-height:20px;color:#7d8794">收益率</span>
<span class="t" style="left:1281px;top:114px;font-size:14px;line-height:20px;color:#7d8794">止盈/止损</span>
<span class="t" style="left:1386px;top:114px;font-size:14px;line-height:20px;color:#7d8794">操作</span>
<div class="abs" style="left:0;top:150px;width:1630px;height:1px;background:#252f3d"></div>
<div class="abs" style="left:0;top:216px;width:1630px;height:1px;background:#252f3d"></div>
<span class="t" style="left:15px;top:166px;font-size:14px;line-height:20px;color:#dfe3e8">BTC/USDT</span>
<span class="t" style="left:126px;top:166px;font-size:14px;line-height:20px;color:#dfe3e8">50X</span>
<span class="t" style="left:193px;top:166px;font-size:14px;line-height:20px;color:#dfe3e8">1000</span>
<span class="t" style="left:308px;top:166px;font-size:14px;line-height:20px;color:#dfe3e8">多</span>
<span class="t" style="left:374px;top:166px;font-size:14px;line-height:20px;color:#dfe3e8">1000</span>
<span class="t" style="left:505px;top:166px;font-size:14px;line-height:20px;color:#dfe3e8">0</span>
<span class="t" style="left:652px;top:166px;font-size:14px;line-height:20px;color:#dfe3e8">4000</span>
<span class="t" style="left:735px;top:166px;font-size:14px;line-height:20px;color:#dfe3e8">104922.8</span>
<span class="t" style="left:850px;top:166px;font-size:14px;line-height:20px;color:#dfe3e8">104803.9</span>
<span class="t" style="left:951px;top:166px;font-size:14px;line-height:20px;color:#dfe3e8">102599.0686</span>
<span class="t" style="left:1079px;top:166px;font-size:14px;line-height:20px;color:#dfe3e8">-226.64283</span>
<span class="t" style="left:1195px;top:166px;font-size:14px;line-height:20px;color:#dfe3e8">-5.66%</span>
<span class="t" style="left:1281px;top:166px;font-size:14px;line-height:20px;color:#dfe3e8">--/--</span>
<div class="btn" style="left:1386px;top:167px;width:44px;background:linear-gradient(90deg,#dc1229,#ea384d);color:#fff;font-weight:bold">平仓</div>
<div class="btn" style="left:1433px;top:166px;width:74px;height:31px;border:1px solid #b8404d;color:#c8404e;line-height:29px">一键反向</div>
<div class="btn" style="left:1510px;top:167px;width:72px;background:linear-gradient(90deg,#5b9bf5,#1f62e0);color:#fff;font-weight:bold">止盈止损</div>
<span class="t" style="left:15px;top:232px;font-size:14px;line-height:20px;color:#dfe3e8">BTC/USDT</span>
<span class="t" style="left:126px;top:232px;font-size:14px;line-height:20px;color:#dfe3e8">50X</span>
<span class="t" style="left:193px;top:232px;font-size:14px;line-height:20px;color:#dfe3e8">150</span>
<span class="t" style="left:308px;top:232px;font-size:14px;line-height:20px;color:#dfe3e8">空</span>
<span class="t" style="left:374px;top:232px;font-size:14px;line-height:20px;color:#dfe3e8">150</span>
<span class="t" style="left:505px;top:232px;font-size:14px;line-height:20px;color:#dfe3e8">0</span>
<span class="t" style="left:652px;top:232px;font-size:14px;line-height:20px;color:#dfe3e8">600</span>
<span class="t" style="left:735px;top:232px;font-size:14px;line-height:20px;color:#dfe3e8">104922.8</span>
<span class="t" style="left:850px;top:232px;font-size:14px;line-height:20px;color:#dfe3e8">104803.9</span>
<span class="t" style="left:951px;top:232px;font-size:14px;line-height:20px;color:#dfe3e8">102599.0686</span>
<span class="t" style="left:1079px;top:232px;font-size:14px;line-height:20px;color:#dfe3e8">33.99642</span>
<span class="t" style="left:1195px;top:232px;font-size:14px;line-height:20px;color:#dfe3e8">5.66%</span>
<span class="t" style="left:1281px;top:232px;font-size:14px;line-height:20px;color:#dfe3e8">--/--</span>
<div class="btn" style="left:1386px;top:233px;width:44px;background:linear-gradient(90deg,#dc1229,#ea384d);color:#fff;font-weight:bold">平仓</div>
<div class="btn" style="left:1433px;top:232px;width:74px;height:31px;border:1px solid #b8404d;color:#c8404e;line-height:29px">一键反向</div>
<div class="btn" style="left:1510px;top:233px;width:72px;background:linear-gradient(90deg,#5b9bf5,#1f62e0);color:#fff;font-weight:bold">止盈止损</div>
</div></div>
<div id="acc" class="panel"><div class="abs" style="left:-1px;top:-1px;width:320px;height:369px">
<span class="t" style="left:17px;top:16px;font-size:14px;line-height:20px;color:#dfe3e8">合约账户</span>
<div class="abs" style="left:256px;top:11px;width:64px;height:31px;border:1px solid #263140;border-radius:3px;font-size:14px;line-height:29px;text-align:center;color:#2a7ae8">资金划转</div>
<span class="t" style="left:17px;top:68px;font-size:14px;line-height:20px;color:#dfe3e8">账户权益（USDT）</span>
<span class="t" style="right:15px;top:68px;font-size:14px;line-height:20px;color:#dfe3e8">4492.3536</span>
<span class="t" style="left:17px;top:121px;font-size:14px;line-height:20px;color:#dfe3e8">可用（USDT）</span>
<span class="t" style="right:15px;top:121px;font-size:14px;line-height:20px;color:#dfe3e8">85</span>
<span class="t" style="left:17px;top:174px;font-size:14px;line-height:20px;color:#dfe3e8">持仓保证金（USDT）</span>
<span class="t" style="right:15px;top:174px;font-size:14px;line-height:20px;color:#dfe3e8">4600</span>
<span class="t" style="left:17px;top:227px;font-size:14px;line-height:20px;color:#dfe3e8">委托冻结（USDT）</span>
<span class="t" style="right:15px;top:227px;font-size:14px;line-height:20px;color:#dfe3e8">0</span>
<span class="t" style="left:17px;top:280px;font-size:14px;line-height:20px;color:#dfe3e8">未实现盈亏（USDT）</span>
<span class="t" style="right:15px;top:280px;font-size:14px;line-height:20px;color:#4caf7a">-192.64641</span>
<span class="t" style="left:17px;top:333px;font-size:14px;line-height:20px;color:#dfe3e8">风险率（USDT）</span>
<span class="t" style="right:15px;top:333px;font-size:14px;line-height:20px;color:#e03a3a">97.65%</span>
</div></div>
<div id="ft" class="abs"><div class="abs" style="left:425px;top:70px;width:160px;height:3px;background:#000"></div><div class="abs" style="left:980px;top:70px;width:1px;height:3px;background:#aab3bf"></div></div>
<div class="abs" style="left:0;top:1214px;width:7px;height:7px;background:radial-gradient(circle at 100% 0,rgba(154,168,184,0) 5.500px,#9aa8b8 7px)"></div>
<div class="abs" style="left:1955px;top:1214px;width:7px;height:7px;background:radial-gradient(circle at 0 0,rgba(154,168,184,0) 5.500px,#9aa8b8 7px)"></div>
</div>
</body>
</html>
